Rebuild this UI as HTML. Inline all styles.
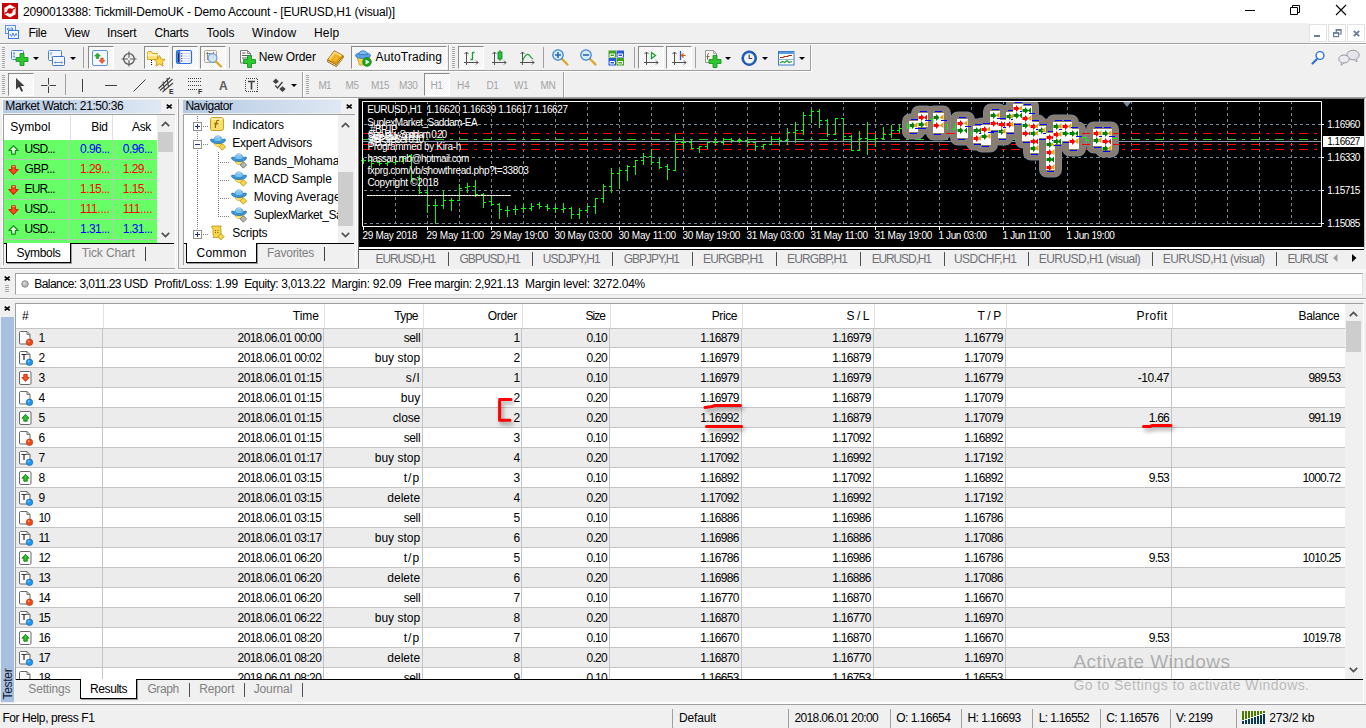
<!DOCTYPE html>
<html lang="en">
<head>
<meta charset="utf-8">
<title>2090013388: Tickmill-DemoUK - Demo Account - [EURUSD,H1 (visual)]</title>
<style>
html,body{margin:0;padding:0;}
body{width:1366px;height:728px;overflow:hidden;background:#f0f0f0;font-family:"Liberation Sans",sans-serif;font-size:12px;color:#000;}
#app{position:relative;width:1366px;height:728px;overflow:hidden;background:#f0f0f0;}
.a{position:absolute;}
.t{position:absolute;white-space:pre;line-height:16px;height:16px;}
.hl{position:absolute;height:1px;}
.vl{position:absolute;width:1px;}
svg{position:absolute;overflow:visible;}
.grip{position:absolute;width:3px;background:repeating-linear-gradient(to bottom,#a8a8a8 0,#a8a8a8 1px,transparent 1px,transparent 2px);}
.pressed{position:absolute;background:#f8f8f8;border:1px solid #8a8a8a;border-right-color:#fff;border-bottom-color:#fff;box-sizing:border-box;background-image:repeating-conic-gradient(#ffffff 0% 25%, #f0f0f0 0% 50%);background-size:2px 2px;}
.sep{position:absolute;width:1px;background:#a0a0a0;}
.dd{position:absolute;width:0;height:0;border-left:3px solid transparent;border-right:3px solid transparent;border-top:3px solid #000;}
.tf{color:#b0b0b0;font-size:11px;}
</style>
</head>
<body>
<div id="app">
<div class="a" style="left:0px;top:0px;width:1366px;height:23px;background:#ffffff;"></div>
<svg style="left:2px;top:3px" width="16" height="16" viewBox="0 0 16 16"><rect width="16" height="16" fill="#cc0000"/><path d="M8 1.6l5.6 3.2v6.4L8 14.4 2.4 11.2V4.8z" fill="#fff"/><circle cx="8" cy="8" r="2.7" fill="#cc0000"/><path d="M2.6 10.6L12.9 5.2" stroke="#cc0000" stroke-width="1.3"/></svg>
<div class="t" style="left:23.00px;top:4px;letter-spacing:-0.166px;">2090013388: Tickmill-DemoUK - Demo Account - [EURUSD,H1 (visual)]</div>
<div class="a" style="left:1245px;top:10px;width:10px;height:1px;background:#000;"></div>
<svg style="left:1290px;top:5px" width="10" height="10" viewBox="0 0 10 10"><path d="M0.5 2.5h7v7h-7zM2.5 2.5v-2h7v7h-2" fill="none" stroke="#000" stroke-width="1"/></svg>
<svg style="left:1336px;top:5px" width="10" height="10" viewBox="0 0 10 10"><path d="M0 0l10 10M10 0L0 10" fill="none" stroke="#000" stroke-width="1.1"/></svg>
<div class="a" style="left:0px;top:23px;width:1366px;height:20px;background:#f0f0f0;"></div>
<svg style="left:5px;top:25px" width="15" height="15" viewBox="0 0 15 15"><rect x="0.5" y="0.5" width="10" height="8" fill="#eef4ff" stroke="#5b92ea" stroke-width="1"/><path d="M2 4h6M3.5 2.5L2 4l1.5 1.5M6.5 2.5L8 4 6.5 5.5" stroke="#3b78e7" fill="none" stroke-width="0.9"/><rect x="3.5" y="5.5" width="10" height="8" fill="#f4f8ff" stroke="#3b78e7" stroke-width="1"/><path d="M5 9l1.5 2.5L8 8l1.5 3.5L11 8.5l1 2" stroke="#3b78e7" fill="none" stroke-width="0.9"/></svg>
<div class="t" style="left:28.50px;top:25px;letter-spacing:-0.336px;">File</div>
<div class="t" style="left:64.50px;top:25px;letter-spacing:-0.199px;">View</div>
<div class="t" style="left:107.00px;top:25px;letter-spacing:-0.083px;">Insert</div>
<div class="t" style="left:154.50px;top:25px;letter-spacing:-0.224px;">Charts</div>
<div class="t" style="left:206.50px;top:25px;letter-spacing:-0.003px;">Tools</div>
<div class="t" style="left:252.00px;top:25px;letter-spacing:0.302px;">Window</div>
<div class="t" style="left:314.00px;top:25px;letter-spacing:0.203px;">Help</div>
<div class="a" style="left:1309px;top:23px;width:57px;height:20px;background:#ffffff;"></div>
<div class="a" style="left:1309px;top:24px;width:18px;height:18px;background:#ffffff;border:1px solid #e2e2e2;box-sizing:border-box;"></div>
<div class="a" style="left:1328px;top:24px;width:18px;height:18px;background:#ffffff;border:1px solid #e2e2e2;box-sizing:border-box;"></div>
<div class="a" style="left:1347px;top:24px;width:18px;height:18px;background:#ffffff;border:1px solid #e2e2e2;box-sizing:border-box;"></div>
<div class="a" style="left:1314px;top:35px;width:6px;height:2px;background:#6a7f98;"></div>
<svg style="left:1332px;top:28px" width="10" height="10" viewBox="0 0 10 10"><path d="M4.300 5.500V2h4.700v4h-2" fill="none" stroke="#6a7f98" stroke-width="1.200"/><path d="M3.700 1.800h5.900" stroke="#6a7f98" stroke-width="1.700"/><rect x="1.600" y="4.800" width="4.900" height="3.800" fill="#ffffff" stroke="#6a7f98" stroke-width="1.200"/><path d="M1 4.900h6.100" stroke="#6a7f98" stroke-width="1.700"/></svg>
<svg style="left:1353px;top:30px" width="7" height="7" viewBox="0 0 7 7"><path d="M0.800 0.800l5.400 5.400M6.200 0.800L0.800 6.200" fill="none" stroke="#6a7f98" stroke-width="1.900"/></svg>
<div class="hl" style="left:0px;top:43px;width:1366px;background:#a0a0a0"></div>
<div class="hl" style="left:0px;top:44px;width:1366px;background:#ffffff"></div>
<div class="hl" style="left:0px;top:70px;width:810px;background:#a0a0a0"></div>
<div class="hl" style="left:0px;top:71px;width:811px;background:#ffffff"></div>
<div class="vl" style="left:810px;top:45px;height:26px;background:#a0a0a0"></div>
<div class="vl" style="left:811px;top:45px;height:27px;background:#ffffff"></div>
<div class="grip" style="left:2px;top:47px;width:3px;height:21px;"></div>
<div class="grip" style="left:452px;top:47px;width:3px;height:21px;"></div>
<div class="vl" style="left:448px;top:45px;height:25px;background:#a0a0a0"></div>
<div class="vl" style="left:449px;top:45px;height:25px;background:#ffffff"></div>
<div class="pressed" style="left:88px;top:46px;width:26px;height:23px;"></div>
<div class="pressed" style="left:144px;top:46px;width:25px;height:23px;"></div>
<div class="pressed" style="left:172px;top:46px;width:26px;height:23px;"></div>
<div class="pressed" style="left:200px;top:46px;width:26px;height:23px;"></div>
<div class="pressed" style="left:351px;top:46px;width:96px;height:23px;"></div>
<div class="pressed" style="left:458px;top:46px;width:26px;height:23px;"></div>
<div class="pressed" style="left:638px;top:46px;width:26px;height:23px;"></div>
<div class="pressed" style="left:666px;top:46px;width:26px;height:23px;"></div>
<div class="sep" style="left:83px;top:47px;width:1px;height:21px;"></div>
<div class="sep" style="left:229px;top:47px;width:1px;height:21px;"></div>
<div class="sep" style="left:543px;top:47px;width:1px;height:21px;"></div>
<div class="sep" style="left:634px;top:47px;width:1px;height:21px;"></div>
<div class="sep" style="left:695px;top:47px;width:1px;height:21px;"></div>
<div class="dd" style="left:33px;top:57px;width:0px;height:0px;"></div>
<div class="dd" style="left:70px;top:57px;width:0px;height:0px;"></div>
<div class="dd" style="left:725px;top:57px;width:0px;height:0px;"></div>
<div class="dd" style="left:762px;top:57px;width:0px;height:0px;"></div>
<div class="dd" style="left:799px;top:57px;width:0px;height:0px;"></div>
<svg style="left:11px;top:50px" width="18" height="16" viewBox="0 0 18 16"><rect x="0.5" y="0.5" width="12" height="9" rx="1" fill="#f3f7fd" stroke="#4a86d0"/><path d="M3 2.5v5M2 4l1-1.5L4 4M2 6l1 1.5L4 6" stroke="#6d8fb8" fill="none" stroke-width="0.8"/><path d="M9.5 4h4v4h4v4h-4v4h-4v-4h-4v-4h4z" fill="#2cc82c" stroke="#0c8a1c" stroke-width="0.8" transform="translate(-0.5,-0.5)"/></svg>
<svg style="left:48px;top:50px" width="18" height="16" viewBox="0 0 18 16"><rect x="0.5" y="0.5" width="13" height="10" rx="1" fill="#f3f7fd" stroke="#4a86d0"/><path d="M3 2.5v3M3 7h7.5M2 3.5l1-1 1 1M9.5 6l1 1-1 1" stroke="#6d8fb8" fill="none" stroke-width="0.8"/><rect x="4.5" y="6.5" width="12" height="9" rx="1" fill="#f3f7fd" stroke="#3a76c4"/><path d="M6.5 12.5h8M7.5 11.5l-1 1 1 1M13.5 11.5l1 1-1 1" stroke="#4a7ab8" fill="none" stroke-width="0.8"/></svg>
<svg style="left:92px;top:50px" width="17" height="16" viewBox="0 0 17 16"><rect x="0.5" y="0.5" width="15" height="15" rx="1.5" fill="#f5f9ff" stroke="#5b95dc"/><path d="M5.5 3l3 3h-1.7v2.5h-2.6V6H2.5z" fill="#2db02d" stroke="#128a12" stroke-width="0.5"/><path d="M10 13.5l-3-3h1.7V8h2.6v2.5H13z" fill="#f06030" stroke="#c83c10" stroke-width="0.5"/></svg>
<svg style="left:120.5px;top:50.5px" width="16" height="16" viewBox="0 0 16 16"><circle cx="8" cy="8" r="5.300" fill="none" stroke="#585858" stroke-width="1.300"/><path d="M8 0.500v15M0.500 8h15" stroke="#585858" stroke-width="1.100"/><circle cx="8" cy="8" r="1.200" fill="#f0f0f0"/></svg>
<svg style="left:147px;top:49px" width="20" height="18" viewBox="0 0 20 18"><path d="M0.5 3.5v7h10v-6h-5l-1-2h-3z" fill="#ffe27a" stroke="#d0a020" stroke-width="0.9"/><path d="M0.5 6h10" stroke="#fff6c8" stroke-width="1.5"/><path d="M4.5 11v5" stroke="#202020" stroke-width="1" stroke-dasharray="1 1"/><path d="M12.5 6.5l1.7 3.6 3.8.4-2.8 2.7.8 3.8-3.5-1.9-3.5 1.9.8-3.8-2.8-2.7 3.8-.4z" fill="#ffd94a" stroke="#c79a18" stroke-width="0.9"/></svg>
<svg style="left:176px;top:50px" width="17" height="15" viewBox="0 0 17 15"><rect x="0.5" y="0.5" width="15" height="13" rx="1.5" fill="#ffffff" stroke="#2f6fd0" stroke-width="1.2"/><rect x="1" y="1" width="3.4" height="12" fill="#3f7fe0"/><path d="M2.6 3v9" stroke="#102040" stroke-width="0.9"/><path d="M6 3.5h9M6 6h9M6 8.5h9M6 11h9" stroke="#b8c8ff" stroke-width="0.8"/><path d="M5 3.5h1.2M5 8.5h1.2" stroke="#e02020" stroke-width="1.2"/><path d="M5 6h1.2M5 11h1.2" stroke="#202020" stroke-width="1.2"/></svg>
<svg style="left:204px;top:50px" width="19" height="18" viewBox="0 0 19 18"><rect x="0.5" y="0.5" width="12" height="12" rx="1" fill="#f4f2ea" stroke="#b0a890"/><path d="M3.5 2v8M2 3.5h8M9.5 2v7" stroke="#707070" stroke-width="0.8" fill="none"/><circle cx="8.5" cy="8" r="4.4" fill="#cfe3f8" fill-opacity="0.85" stroke="#6fa0dc" stroke-width="1.2"/><path d="M12 11.5l5 5" stroke="#d8a828" stroke-width="2.2" stroke-linecap="round"/></svg>
<svg style="left:239px;top:50px" width="18" height="18" viewBox="0 0 18 18"><path d="M1.5 0.5h7l3 3v9.5h-10z" fill="#fafafa" stroke="#707070" stroke-width="0.9"/><path d="M8.5 0.5v3h3" fill="none" stroke="#707070" stroke-width="0.8"/><path d="M3 3h3.5M3 5.5h6M3 8h6" stroke="#606060" stroke-width="1"/><path d="M9 7h4v4h4v4h-4v4h-4v-4h-4v-4h4z" fill="#2cc82c" stroke="#0c8a1c" stroke-width="0.8" transform="translate(-0.5,-1.5)"/></svg>
<div class="t" style="left:258.80px;top:49px;letter-spacing:-0.113px;">New Order</div>
<svg style="left:327px;top:50px" width="17" height="17" viewBox="0 0 17 17"><path d="M0.600 10.400v1.300l8.800 4.800 6.800-8.800V6.200" fill="#b87c10" stroke="#7a4c04" stroke-width="0.9"/><path d="M1.200 11.200l8.200 4.400 6.200-8" fill="none" stroke="#fff0c0" stroke-width="0.9"/><path d="M0.500 9.800L7.300 0.800l8.900 4.900-6.800 9z" fill="#f0b428" stroke="#9a6408" stroke-width="0.9"/><path d="M2.200 9.300L7.700 2.300l6.600 3.600" fill="none" stroke="#ffe48c" stroke-width="1.400"/><path d="M5 10.500l4 2.300 4.500-6" fill="none" stroke="#d89418" stroke-width="1.200"/></svg>
<svg style="left:355px;top:49px" width="17" height="18" viewBox="0 0 17 18"><path d="M2 8l2.5 8h8L15 8z" fill="#f6d250" stroke="#c09a20" stroke-width="0.8"/><ellipse cx="8" cy="6.5" rx="7.6" ry="3" fill="#5aa0e0" stroke="#2f78c0" stroke-width="0.8"/><path d="M3.8 5.5c0-5 8.4-5 8.4 0z" fill="#7cbcf0" stroke="#2f78c0" stroke-width="0.8"/><circle cx="12" cy="13" r="4.3" fill="#18a818" stroke="#0b7a0b" stroke-width="0.7"/><path d="M10.6 10.6l4 2.4-4 2.4z" fill="#fff"/></svg>
<div class="t" style="left:375.60px;top:49px;letter-spacing:0.143px;">AutoTrading</div>
<svg style="left:463px;top:50px" width="16" height="16" viewBox="0 0 16 16"><path d="M3.5 2v13M1.5 4l2-2 2 2M1 12.5h14M13 10.5l2 2-2 2" fill="none" stroke="#505050" stroke-width="1"/><path d="M9.5 2v8M9.5 2.5h2M7.5 9.5h2" stroke="#18a030" stroke-width="1.3" fill="none"/></svg>
<svg style="left:491px;top:50px" width="16" height="16" viewBox="0 0 16 16"><path d="M3.5 2v13M1.5 4l2-2 2 2M1 12.5h14M13 10.5l2 2-2 2" fill="none" stroke="#505050" stroke-width="1"/><path d="M9 0v11" stroke="#108020" stroke-width="1"/><rect x="7" y="2" width="4" height="7" fill="#28c040" stroke="#108020" stroke-width="0.8"/></svg>
<svg style="left:519px;top:50px" width="16" height="16" viewBox="0 0 16 16"><path d="M3.5 2v13M1.5 4l2-2 2 2M1 12.5h14M13 10.5l2 2-2 2" fill="none" stroke="#505050" stroke-width="1"/><path d="M3.5 11c2-5 4.5-8 6.5-6s2 3 4 4" stroke="#18a030" stroke-width="1.2" fill="none"/></svg>
<svg style="left:552px;top:49px" width="17" height="17" viewBox="0 0 17 17"><path d="M9.5 9.5l6 6" stroke="#d8a828" stroke-width="2.4" stroke-linecap="round"/><circle cx="6" cy="6" r="5.2" fill="#d6ebfb" stroke="#2f7fd0" stroke-width="1.2"/><path d="M3 6h6M6 3v6" stroke="#2868b8" stroke-width="1.6"/></svg>
<svg style="left:580px;top:49px" width="17" height="17" viewBox="0 0 17 17"><path d="M9.5 9.5l6 6" stroke="#d8a828" stroke-width="2.4" stroke-linecap="round"/><circle cx="6" cy="6" r="5.2" fill="#d6ebfb" stroke="#2f7fd0" stroke-width="1.2"/><path d="M3 6h6" stroke="#2868b8" stroke-width="1.6"/></svg>
<svg style="left:608px;top:50px" width="17" height="16" viewBox="0 0 17 16"><rect x="0.5" y="0.5" width="7.5" height="7" fill="#3fa320"/><rect x="8.5" y="0.5" width="7.5" height="7" fill="#2858d8"/><rect x="0.5" y="8" width="7.5" height="7.5" fill="#2858d8"/><rect x="8.5" y="8" width="7.5" height="7.5" fill="#3fa320"/><path d="M2 4h4.5v2.5H2zM10 4h4.5v2.5H10zM2 11.5h4.5V14H2zM10 11.5h4.5V14H10z" fill="none" stroke="#fff" stroke-width="1"/></svg>
<svg style="left:643px;top:50px" width="16" height="16" viewBox="0 0 16 16"><path d="M3.5 2v13M1.5 4l2-2 2 2M1 12.5h14M13 10.5l2 2-2 2" fill="none" stroke="#505050" stroke-width="1"/><path d="M8.5 2.5l4 3-4 3z" fill="#fff" stroke="#18a030" stroke-width="1.3"/></svg>
<svg style="left:671px;top:50px" width="16" height="16" viewBox="0 0 16 16"><path d="M3.5 2v13M1.5 4l2-2 2 2M1 12.5h14M13 10.5l2 2-2 2" fill="none" stroke="#505050" stroke-width="1"/><path d="M9.5 1v9" stroke="#2060c0" stroke-width="1.3"/><path d="M10.5 5.5h4M12.5 3.5l-2 2 2 2" stroke="#e05010" stroke-width="1.2" fill="none"/></svg>
<svg style="left:705px;top:50px" width="17" height="18" viewBox="0 0 17 18"><path d="M0.5 0.5h8l3 3v9h-11z" fill="#f6f4ee" stroke="#909090" stroke-width="0.9"/><path d="M8.5 0.5v3h3" fill="none" stroke="#909090" stroke-width="0.8"/><path d="M4 3.5c-1.5 0-1.5 1.5-1.5 3v3M1.5 6.5h3" stroke="#606040" stroke-width="0.9" fill="none"/><path d="M9 7h4v4h4v4h-4v4h-4v-4h-4v-4h4z" fill="#2cc82c" stroke="#0c8a1c" stroke-width="0.8" transform="translate(-1,-1.5)"/></svg>
<svg style="left:741px;top:50px" width="17" height="17" viewBox="0 0 17 17"><circle cx="8.2" cy="8.2" r="7.3" fill="#1a5fc8" stroke="#0d3f90" stroke-width="0.8"/><circle cx="8.2" cy="8.2" r="5.2" fill="#f4f4f0"/><path d="M8.2 4.5v4h3" stroke="#404040" stroke-width="1.1" fill="none"/></svg>
<svg style="left:778px;top:51px" width="17" height="15" viewBox="0 0 17 15"><rect x="0.5" y="0.5" width="15.5" height="13.5" fill="#ffffff" stroke="#3a78c8" stroke-width="1"/><rect x="1" y="1" width="14.5" height="2" fill="#5a98e0"/><path d="M2 6.5h3l1.5-1h3l1.5-1h3" stroke="#a03010" stroke-width="1.2" fill="none"/><path d="M1 8.5h15" stroke="#7aa8e0" stroke-width="0.8"/><path d="M2 12l2.5-1.5 2 1 2.5-2 2 2 3-1" stroke="#18a030" stroke-width="1.2" fill="none"/></svg>
<svg style="left:1311px;top:50px" width="15" height="15" viewBox="0 0 15 15"><path d="M5.5 9.5l-4 4" stroke="#2f6fd8" stroke-width="2.2" stroke-linecap="round"/><circle cx="9" cy="5.5" r="3.9" fill="#fff" stroke="#2f6fd8" stroke-width="1.4"/></svg>
<svg style="left:1338px;top:49px" width="23" height="17" viewBox="0 0 23 17"><ellipse cx="15" cy="6" rx="6.2" ry="4.8" fill="#e6e6ea" stroke="#8c8c96" stroke-width="0.9"/><path d="M16 10.5l3 2.5-0.5-3.2" fill="#e6e6ea" stroke="#8c8c96" stroke-width="0.8"/><ellipse cx="6" cy="10" rx="5.2" ry="4" fill="#ececf0" stroke="#8c8c96" stroke-width="0.9"/><path d="M3.5 13.3l-0.5 3 3-2.4" fill="#ececf0" stroke="#8c8c96" stroke-width="0.8"/></svg>
<div class="hl" style="left:0px;top:97px;width:1366px;background:#a0a0a0"></div>
<div class="hl" style="left:0px;top:98px;width:358px;background:#ffffff"></div>
<div class="grip" style="left:2px;top:75px;width:3px;height:20px;"></div>
<div class="grip" style="left:306px;top:75px;width:3px;height:20px;"></div>
<div class="pressed" style="left:8px;top:73px;width:26px;height:23px;"></div>
<div class="pressed" style="left:424px;top:73px;width:26px;height:23px;"></div>
<div class="sep" style="left:65px;top:74px;width:1px;height:21px;"></div>
<div class="vl" style="left:302px;top:72px;height:25px;background:#a0a0a0"></div>
<div class="vl" style="left:303px;top:72px;height:25px;background:#ffffff"></div>
<div class="vl" style="left:563px;top:72px;height:25px;background:#a0a0a0"></div>
<div class="vl" style="left:564px;top:72px;height:25px;background:#ffffff"></div>
<svg style="left:15px;top:77px" width="10" height="16" viewBox="0 0 10 16"><path d="M1 1v11.5l3-2.8 2.3 5 1.8-.8-2.3-4.8H9.5z" fill="#404040"/></svg>
<svg style="left:41px;top:78px" width="16" height="16" viewBox="0 0 16 16"><path d="M7.5 0v6.5M7.5 8.5V15M0 7.5h6.5M8.5 7.5H15" stroke="#404040" stroke-width="1"/></svg>
<div class="vl" style="left:82px;top:79px;height:13px;background:#404040"></div>
<div class="hl" style="left:105px;top:85px;width:12px;background:#404040"></div>
<svg style="left:133px;top:79px" width="13" height="13" viewBox="0 0 13 13"><path d="M0.5 12.5L12.5 0.5" stroke="#404040" stroke-width="1"/></svg>
<svg style="left:158px;top:77px" width="18" height="18" viewBox="0 0 18 18"><path d="M0.500 11.500L12 0.500M2 13.500L14.500 2M4.500 15L15 6M5 4.500l1.500 9M9 1l1.500 9" stroke="#404040" stroke-width="1.100" fill="none"/></svg>
<div class="t" style="left:169.00px;top:87px;line-height:9px;height:9px;font-size:7px;color:#303030;font-weight:bold;">E</div>
<svg style="left:188px;top:78px" width="14" height="14" viewBox="0 0 14 14"><path d="M0 0.5h13M0 3.5h13M0 7.5h13M0 11.5h9" stroke="#404040" stroke-width="1" stroke-dasharray="1 1" fill="none"/></svg>
<div class="t" style="left:198.00px;top:87px;line-height:9px;height:9px;font-size:7px;color:#303030;font-weight:bold;">F</div>
<div class="t" style="left:219.00px;top:78px;letter-spacing:-0.172px;color:#5a5a5a;font-weight:bold;">A</div>
<svg style="left:245px;top:78px" width="13" height="14" viewBox="0 0 13 14"><rect x="0.5" y="0.5" width="12" height="13" fill="none" stroke="#404040" stroke-width="1" stroke-dasharray="1 1" shape-rendering="crispEdges"/><path d="M3 3.5h7M6.5 3.5v8" stroke="#404040" stroke-width="1.6"/></svg>
<svg style="left:272px;top:78px" width="15" height="15" viewBox="0 0 15 15"><path d="M3.800 0.400l3 3-3 2.600-3-2.600z" fill="#404040"/><path d="M10.500 8.200l3.200 2.800-3.200 3-3.200-3z" fill="#404040"/><path d="M3.200 7.500l2.300 2.500 5-6" stroke="#404040" stroke-width="1.300" fill="none"/></svg>
<div class="dd" style="left:291px;top:84px;width:0px;height:0px;"></div>
<div class="t" style="left:318.50px;top:79px;letter-spacing:-0.945px;line-height:13px;height:13px;font-size:10px;color:#a4a4a4;">M1</div>
<div class="t" style="left:345.50px;top:79px;letter-spacing:-0.445px;line-height:13px;height:13px;font-size:10px;color:#a4a4a4;">M5</div>
<div class="t" style="left:371.00px;top:79px;letter-spacing:-0.484px;line-height:13px;height:13px;font-size:10px;color:#a4a4a4;">M15</div>
<div class="t" style="left:399.00px;top:79px;letter-spacing:-0.318px;line-height:13px;height:13px;font-size:10px;color:#a4a4a4;">M30</div>
<div class="t" style="left:430.50px;top:79px;letter-spacing:-0.391px;line-height:13px;height:13px;font-size:10px;color:#a4a4a4;">H1</div>
<div class="t" style="left:457.00px;top:79px;letter-spacing:0.109px;line-height:13px;height:13px;font-size:10px;color:#a4a4a4;">H4</div>
<div class="t" style="left:486.50px;top:79px;letter-spacing:-0.391px;line-height:13px;height:13px;font-size:10px;color:#a4a4a4;">D1</div>
<div class="t" style="left:514.00px;top:79px;letter-spacing:-0.500px;line-height:13px;height:13px;font-size:10px;color:#a4a4a4;">W1</div>
<div class="t" style="left:540.50px;top:79px;letter-spacing:-0.273px;line-height:13px;height:13px;font-size:10px;color:#a4a4a4;">MN</div>
<div class="vl" style="left:2px;top:99px;height:168px;background:#ffffff"></div>
<div class="vl" style="left:2px;top:99px;height:168px;background:#ffffff"></div>
<div class="a" style="left:3px;top:100px;width:158px;height:13px;background:linear-gradient(to right,#b4c8e2,#dfe8f4);"></div>
<div class="t" style="left:5.30px;top:98px;letter-spacing:-0.405px;">Market Watch: 21:50:36</div>
<svg style="left:166px;top:104px" width="6.4" height="5" viewBox="0 0 6.4 5"><path d="M0.700 0.600L5.7 4.4M5.7 0.600L0.700 4.4" stroke="#000" stroke-width="1.7" fill="none"/></svg>
<div class="a" style="left:3px;top:114px;width:172px;height:129px;background:#ffffff;"></div>
<div class="hl" style="left:3px;top:114px;width:172px;background:#a0a0a0"></div>
<div class="vl" style="left:3px;top:114px;height:151px;background:#a0a0a0"></div>
<div class="a" style="left:4px;top:140px;width:153px;height:103px;background:#66ff66;"></div>
<div class="a" style="left:157px;top:115px;width:18px;height:128px;background:#f0f0f0;"></div>
<div class="a" style="left:158px;top:132px;width:15px;height:20px;background:#cdcdcd;"></div>
<svg style="left:161px;top:121px" width="9" height="6" viewBox="0 0 9 6"><path d="M0.8 5.2L4.5 1.5 8.2 5.2" fill="none" stroke="#505050" stroke-width="1.7"/></svg>
<svg style="left:161px;top:232px" width="9" height="6" viewBox="0 0 9 6"><path d="M0.8 0.8L4.5 4.5 8.2 0.8" fill="none" stroke="#505050" stroke-width="1.7"/></svg>
<div class="vl" style="left:70px;top:115px;height:25px;background:#e0e0e0"></div>
<div class="vl" style="left:112px;top:115px;height:25px;background:#e0e0e0"></div>
<div class="vl" style="left:69px;top:140px;height:103px;background:#b4c8b4"></div>
<div class="vl" style="left:112px;top:140px;height:103px;background:#b4c8b4"></div>
<div class="hl" style="left:4px;top:159px;width:153px;background:#b4c8b4"></div>
<div class="hl" style="left:4px;top:179px;width:153px;background:#b4c8b4"></div>
<div class="hl" style="left:4px;top:199px;width:153px;background:#b4c8b4"></div>
<div class="hl" style="left:4px;top:219px;width:153px;background:#b4c8b4"></div>
<div class="hl" style="left:4px;top:239px;width:153px;background:#b4c8b4"></div>
<div class="t" style="left:10.30px;top:119px;letter-spacing:-0.003px;">Symbol</div>
<div class="t" style="left:91.20px;top:119px;letter-spacing:-0.281px;">Bid</div>
<div class="t" style="left:132.00px;top:119px;letter-spacing:-0.333px;">Ask</div>
<svg style="left:8px;top:145px" width="11" height="10" viewBox="0 0 11 10"><path d="M5.5 0.7l4.6 4.8H7.3v3.6H3.7V5.5H0.9z" fill="#e8ffe8" stroke="#128a12" stroke-width="1.2" stroke-linejoin="round"/></svg>
<div class="t" style="left:24.60px;top:141px;letter-spacing:-0.888px;">USD...</div>
<div class="t" style="left:80.00px;top:141px;letter-spacing:-0.547px;color:#0000ff;">0.96...</div>
<div class="t" style="left:122.80px;top:141px;letter-spacing:-0.547px;color:#0000ff;">0.96...</div>
<svg style="left:8px;top:165px" width="11" height="10" viewBox="0 0 11 10"><path d="M5.5 9.3L0.9 4.5h2.8V0.9h3.6v3.6h2.8z" fill="#ff4a20" stroke="#d02808" stroke-width="1.1" stroke-linejoin="round"/><path d="M4.3 1.5h2.4" stroke="#ffb090" stroke-width="1"/></svg>
<div class="t" style="left:24.60px;top:161px;letter-spacing:-0.628px;">GBP...</div>
<div class="t" style="left:80.00px;top:161px;letter-spacing:-0.547px;color:#ff0000;">1.29...</div>
<div class="t" style="left:122.80px;top:161px;letter-spacing:-0.547px;color:#ff0000;">1.29...</div>
<svg style="left:8px;top:185px" width="11" height="10" viewBox="0 0 11 10"><path d="M5.5 9.3L0.9 4.5h2.8V0.9h3.6v3.6h2.8z" fill="#ff4a20" stroke="#d02808" stroke-width="1.1" stroke-linejoin="round"/><path d="M4.3 1.5h2.4" stroke="#ffb090" stroke-width="1"/></svg>
<div class="t" style="left:24.60px;top:181px;letter-spacing:-0.888px;">EUR...</div>
<div class="t" style="left:80.00px;top:181px;letter-spacing:-0.547px;color:#ff0000;">1.15...</div>
<div class="t" style="left:122.80px;top:181px;letter-spacing:-0.547px;color:#ff0000;">1.15...</div>
<svg style="left:8px;top:205px" width="11" height="10" viewBox="0 0 11 10"><path d="M5.5 9.3L0.9 4.5h2.8V0.9h3.6v3.6h2.8z" fill="#ff4a20" stroke="#d02808" stroke-width="1.1" stroke-linejoin="round"/><path d="M4.3 1.5h2.4" stroke="#ffb090" stroke-width="1"/></svg>
<div class="t" style="left:24.60px;top:201px;letter-spacing:-0.888px;">USD...</div>
<div class="t" style="left:80.00px;top:201px;letter-spacing:-0.292px;color:#ff0000;">111....</div>
<div class="t" style="left:122.80px;top:201px;letter-spacing:-0.292px;color:#ff0000;">111....</div>
<svg style="left:8px;top:225px" width="11" height="10" viewBox="0 0 11 10"><path d="M5.5 0.7l4.6 4.8H7.3v3.6H3.7V5.5H0.9z" fill="#e8ffe8" stroke="#128a12" stroke-width="1.2" stroke-linejoin="round"/></svg>
<div class="t" style="left:24.60px;top:221px;letter-spacing:-0.888px;">USD...</div>
<div class="t" style="left:80.00px;top:221px;letter-spacing:-0.547px;color:#0000ff;">1.31...</div>
<div class="t" style="left:122.80px;top:221px;letter-spacing:-0.547px;color:#0000ff;">1.31...</div>
<div class="hl" style="left:70px;top:243px;width:104px;background:#000000"></div>
<div class="hl" style="left:4px;top:243px;width:3px;background:#000000"></div>
<div class="a" style="left:6px;top:243px;width:65px;height:20px;background:#ffffff;border:1px solid #000;border-top:none;box-sizing:border-box;box-shadow:1px 1px 0 rgba(0,0,0,0.35);"></div>
<div class="t" style="left:16.50px;top:245px;letter-spacing:-0.288px;">Symbols</div>
<div class="t" style="left:81.70px;top:245px;letter-spacing:-0.123px;color:#808080;">Tick Chart</div>
<div class="vl" style="left:145px;top:247px;height:14px;background:#404040"></div>
<div class="vl" style="left:175px;top:114px;height:152px;background:#ffffff"></div>
<div class="hl" style="left:0px;top:268px;width:175px;background:#a0a0a0"></div>
<div class="vl" style="left:177px;top:99px;height:170px;background:#ffffff"></div>
<div class="vl" style="left:178px;top:99px;height:170px;background:#a0a0a0"></div>
<div class="a" style="left:183px;top:100px;width:158px;height:13px;background:linear-gradient(to right,#b4c8e2,#dfe8f4);"></div>
<div class="t" style="left:185.40px;top:98px;letter-spacing:-0.484px;">Navigator</div>
<svg style="left:346px;top:104px" width="6.4" height="5" viewBox="0 0 6.4 5"><path d="M0.700 0.600L5.7 4.4M5.7 0.600L0.700 4.4" stroke="#000" stroke-width="1.7" fill="none"/></svg>
<div class="a" style="left:183px;top:114px;width:172px;height:129px;background:#ffffff;"></div>
<div class="hl" style="left:183px;top:114px;width:172px;background:#a0a0a0"></div>
<div class="vl" style="left:183px;top:114px;height:151px;background:#a0a0a0"></div>
<div class="a" style="left:338px;top:115px;width:17px;height:128px;background:#f0f0f0;"></div>
<div class="a" style="left:338px;top:172px;width:15px;height:54px;background:#cdcdcd;"></div>
<svg style="left:341px;top:122px" width="9" height="6" viewBox="0 0 9 6"><path d="M0.8 5.2L4.5 1.5 8.2 5.2" fill="none" stroke="#505050" stroke-width="1.7"/></svg>
<svg style="left:341px;top:232px" width="9" height="6" viewBox="0 0 9 6"><path d="M0.8 0.8L4.5 4.5 8.2 0.8" fill="none" stroke="#505050" stroke-width="1.7"/></svg>
<div class="a" style="left:197px;top:116px;width:1px;height:118px;background:repeating-linear-gradient(to bottom,#808080 0,#808080 1px,transparent 1px,transparent 2px);"></div>
<div class="a" style="left:218px;top:152px;width:1px;height:65px;background:repeating-linear-gradient(to bottom,#808080 0,#808080 1px,transparent 1px,transparent 2px);"></div>
<div class="a" style="left:220px;top:162px;width:10px;height:1px;background:repeating-linear-gradient(to right,#808080 0,#808080 1px,transparent 1px,transparent 2px);"></div>
<div class="a" style="left:220px;top:180px;width:10px;height:1px;background:repeating-linear-gradient(to right,#808080 0,#808080 1px,transparent 1px,transparent 2px);"></div>
<div class="a" style="left:220px;top:198px;width:10px;height:1px;background:repeating-linear-gradient(to right,#808080 0,#808080 1px,transparent 1px,transparent 2px);"></div>
<div class="a" style="left:220px;top:216px;width:10px;height:1px;background:repeating-linear-gradient(to right,#808080 0,#808080 1px,transparent 1px,transparent 2px);"></div>
<div class="a" style="left:203px;top:126px;width:6px;height:1px;background:repeating-linear-gradient(to right,#808080 0,#808080 1px,transparent 1px,transparent 2px);"></div>
<div class="a" style="left:203px;top:144px;width:6px;height:1px;background:repeating-linear-gradient(to right,#808080 0,#808080 1px,transparent 1px,transparent 2px);"></div>
<div class="a" style="left:203px;top:234px;width:6px;height:1px;background:repeating-linear-gradient(to right,#808080 0,#808080 1px,transparent 1px,transparent 2px);"></div>
<svg style="left:193px;top:122px" width="9" height="9" viewBox="0 0 9 9"><rect x="0.5" y="0.5" width="8" height="8" fill="#fff" stroke="#909090"/><path d="M2 4.5h5M4.5 2v5" stroke="#2030a0" stroke-width="1"/></svg>
<svg style="left:193px;top:140px" width="9" height="9" viewBox="0 0 9 9"><rect x="0.5" y="0.5" width="8" height="8" fill="#fff" stroke="#909090"/><path d="M2 4.5h5" stroke="#2030a0" stroke-width="1"/></svg>
<svg style="left:193px;top:230px" width="9" height="9" viewBox="0 0 9 9"><rect x="0.5" y="0.5" width="8" height="8" fill="#fff" stroke="#909090"/><path d="M2 4.5h5M4.5 2v5" stroke="#2030a0" stroke-width="1"/></svg>
<svg style="left:210px;top:117px" width="14" height="14" viewBox="0 0 14 14"><rect x="0.5" y="0.5" width="13" height="13" rx="2" fill="#f8de6a" stroke="#c8a020"/><path d="M1.5 2h11" stroke="#fff4c0" stroke-width="1.5"/><path d="M9 3.5c-2-.8-2.6.5-3 3L5.2 11M4 6.8h4.5" stroke="#806000" stroke-width="1.1" fill="none"/></svg>
<div class="t" style="left:232.30px;top:117px;letter-spacing:-0.032px;">Indicators</div>
<svg style="left:210px;top:135px" width="17" height="16" viewBox="0 0 17 16"><path d="M4.300 8c0 4.600 7.400 4.600 7.400 0z" fill="#f7d64a" stroke="#c09a20" stroke-width="0.7"/><path d="M5.200 9.500c1 1.800 4.600 1.800 5.600 0" fill="none" stroke="#fff3b0" stroke-width="0.8"/><path d="M0.500 4.800C0.300 9.600 15.700 9.600 15.500 4.800C15.400 3.600 13.200 4.200 12 5H4C2.800 4.200 0.600 3.600 0.500 4.800z" fill="#3f9ad8" stroke="#1c6fb0" stroke-width="0.8"/><path d="M3.800 5.600c0-6.200 8.400-6.200 8.400 0c-2 1.300-6.400 1.300-8.400 0z" fill="#79c2f2" stroke="#2a80c4" stroke-width="0.7"/><path d="M5.500 3c1-1.600 3.500-1.700 4.500-0.800" fill="none" stroke="#c8e8fc" stroke-width="0.9"/><path d="M12.300 8.600l3.300 3.300-3.300 3.300-3.300-3.300z" fill="#f7d64a" stroke="#b89018" stroke-width="0.8"/></svg>
<div class="t" style="left:232.30px;top:135px;letter-spacing:-0.244px;">Expert Advisors</div>
<div class="a" style="left:253px;top:152px;width:85px;height:72px;overflow:hidden;"><div class="t" style="left:0.70px;top:1px;letter-spacing:-0.157px;">Bands_Mohamad</div>
<div class="t" style="left:0.70px;top:19px;letter-spacing:-0.124px;">MACD Sample</div>
<div class="t" style="left:0.70px;top:37px;letter-spacing:0.084px;">Moving Average</div>
<div class="t" style="left:0.70px;top:55px;letter-spacing:-0.406px;">SuplexMarket_Saddam</div>
</div>
<svg style="left:231px;top:153px" width="17" height="16" viewBox="0 0 17 16"><path d="M4.300 8c0 4.600 7.400 4.600 7.400 0z" fill="#f7d64a" stroke="#c09a20" stroke-width="0.7"/><path d="M5.200 9.500c1 1.800 4.600 1.800 5.600 0" fill="none" stroke="#fff3b0" stroke-width="0.8"/><path d="M0.500 4.800C0.300 9.600 15.700 9.600 15.500 4.800C15.400 3.600 13.200 4.200 12 5H4C2.800 4.200 0.600 3.600 0.500 4.800z" fill="#3f9ad8" stroke="#1c6fb0" stroke-width="0.8"/><path d="M3.800 5.600c0-6.200 8.400-6.200 8.400 0c-2 1.300-6.400 1.300-8.400 0z" fill="#79c2f2" stroke="#2a80c4" stroke-width="0.7"/><path d="M5.500 3c1-1.600 3.500-1.700 4.500-0.800" fill="none" stroke="#c8e8fc" stroke-width="0.9"/><path d="M12.300 8.600l3.300 3.300-3.300 3.300-3.300-3.300z" fill="#b4b4b4" stroke="#686868" stroke-width="0.8"/></svg>
<svg style="left:231px;top:171px" width="17" height="16" viewBox="0 0 17 16"><path d="M4.300 8c0 4.600 7.400 4.600 7.400 0z" fill="#f7d64a" stroke="#c09a20" stroke-width="0.7"/><path d="M5.200 9.500c1 1.800 4.600 1.800 5.600 0" fill="none" stroke="#fff3b0" stroke-width="0.8"/><path d="M0.500 4.800C0.300 9.600 15.700 9.600 15.500 4.800C15.400 3.600 13.200 4.200 12 5H4C2.800 4.200 0.600 3.600 0.500 4.800z" fill="#3f9ad8" stroke="#1c6fb0" stroke-width="0.8"/><path d="M3.800 5.600c0-6.200 8.400-6.200 8.400 0c-2 1.300-6.400 1.300-8.400 0z" fill="#79c2f2" stroke="#2a80c4" stroke-width="0.7"/><path d="M5.500 3c1-1.600 3.500-1.700 4.500-0.800" fill="none" stroke="#c8e8fc" stroke-width="0.9"/><path d="M12.300 8.600l3.300 3.300-3.300 3.300-3.300-3.300z" fill="#f7d64a" stroke="#b89018" stroke-width="0.8"/></svg>
<svg style="left:231px;top:189px" width="17" height="16" viewBox="0 0 17 16"><path d="M4.300 8c0 4.600 7.400 4.600 7.400 0z" fill="#f7d64a" stroke="#c09a20" stroke-width="0.7"/><path d="M5.200 9.500c1 1.800 4.600 1.800 5.600 0" fill="none" stroke="#fff3b0" stroke-width="0.8"/><path d="M0.500 4.800C0.300 9.600 15.700 9.600 15.500 4.800C15.400 3.600 13.200 4.200 12 5H4C2.800 4.200 0.600 3.600 0.500 4.800z" fill="#3f9ad8" stroke="#1c6fb0" stroke-width="0.8"/><path d="M3.800 5.600c0-6.200 8.400-6.200 8.400 0c-2 1.300-6.400 1.300-8.400 0z" fill="#79c2f2" stroke="#2a80c4" stroke-width="0.7"/><path d="M5.500 3c1-1.600 3.500-1.700 4.500-0.800" fill="none" stroke="#c8e8fc" stroke-width="0.9"/><path d="M12.300 8.600l3.300 3.300-3.300 3.300-3.300-3.300z" fill="#f7d64a" stroke="#b89018" stroke-width="0.8"/></svg>
<svg style="left:231px;top:207px" width="17" height="16" viewBox="0 0 17 16"><path d="M4.300 8c0 4.600 7.400 4.600 7.400 0z" fill="#f7d64a" stroke="#c09a20" stroke-width="0.7"/><path d="M5.200 9.500c1 1.800 4.600 1.800 5.600 0" fill="none" stroke="#fff3b0" stroke-width="0.8"/><path d="M0.500 4.800C0.300 9.600 15.700 9.600 15.500 4.800C15.400 3.600 13.200 4.200 12 5H4C2.800 4.200 0.600 3.600 0.500 4.800z" fill="#3f9ad8" stroke="#1c6fb0" stroke-width="0.8"/><path d="M3.800 5.600c0-6.200 8.400-6.200 8.400 0c-2 1.300-6.400 1.300-8.400 0z" fill="#79c2f2" stroke="#2a80c4" stroke-width="0.7"/><path d="M5.500 3c1-1.600 3.500-1.700 4.500-0.800" fill="none" stroke="#c8e8fc" stroke-width="0.9"/><path d="M12.300 8.600l3.300 3.300-3.300 3.300-3.300-3.300z" fill="#b4b4b4" stroke="#686868" stroke-width="0.8"/></svg>
<svg style="left:210px;top:225px" width="15" height="15" viewBox="0 0 15 15"><path d="M2 1h9.5c-1.2 1-1.2 2-.5 3v6c.8 1 .8 2 0 2.600H3c1-1 1-2 0-2.600v-6C2.200 3 1.200 2 2 1z" fill="#f7d64a" stroke="#b89018" stroke-width="0.8"/><path d="M5 5.500h1M7.500 5.500h1M5 7.500h1M7.500 7.500h1" stroke="#806000" stroke-width="1"/><path d="M11 8.500l3.200 3.200-3.200 3.200-3.200-3.200z" fill="#f7d64a" stroke="#b89018" stroke-width="0.8"/></svg>
<div class="t" style="left:232.30px;top:225px;letter-spacing:-0.239px;">Scripts</div>
<div class="hl" style="left:256px;top:243px;width:98px;background:#000000"></div>
<div class="hl" style="left:184px;top:243px;width:3px;background:#000000"></div>
<div class="a" style="left:186px;top:243px;width:71px;height:20px;background:#ffffff;border:1px solid #000;border-top:none;box-sizing:border-box;box-shadow:1px 1px 0 rgba(0,0,0,0.35);"></div>
<div class="t" style="left:196.60px;top:245px;letter-spacing:0.219px;">Common</div>
<div class="t" style="left:267.00px;top:245px;letter-spacing:-0.260px;color:#808080;">Favorites</div>
<div class="vl" style="left:324px;top:247px;height:14px;background:#404040"></div>
<div class="vl" style="left:355px;top:114px;height:152px;background:#ffffff"></div>
<div class="hl" style="left:178px;top:268px;width:178px;background:#a0a0a0"></div>
<div class="vl" style="left:357px;top:99px;height:150px;background:#ffffff"></div>
<div class="vl" style="left:358px;top:99px;height:150px;background:#707070"></div>
<div class="hl" style="left:358px;top:98px;width:1007px;background:#808080"></div>
<div class="a" style="left:359px;top:99px;width:1005px;height:148px;background:#000000;"></div>
<div class="vl" style="left:1364px;top:99px;height:150px;background:#c0c0c0"></div>
<svg style="left:359px;top:99px" width="1005" height="148" viewBox="0 0 1005 148"><path d="M36.5 3V127" stroke="#778899" stroke-width="1" stroke-dasharray="3 3" stroke-dashoffset="1"/><path d="M68.5 3V127" stroke="#778899" stroke-width="1" stroke-dasharray="3 3" stroke-dashoffset="1"/><path d="M100.5 3V127" stroke="#778899" stroke-width="1" stroke-dasharray="3 3" stroke-dashoffset="1"/><path d="M132.5 3V127" stroke="#778899" stroke-width="1" stroke-dasharray="3 3" stroke-dashoffset="1"/><path d="M164.5 3V127" stroke="#778899" stroke-width="1" stroke-dasharray="3 3" stroke-dashoffset="1"/><path d="M196.5 3V127" stroke="#778899" stroke-width="1" stroke-dasharray="3 3" stroke-dashoffset="1"/><path d="M228.5 3V127" stroke="#778899" stroke-width="1" stroke-dasharray="3 3" stroke-dashoffset="1"/><path d="M260.5 3V127" stroke="#778899" stroke-width="1" stroke-dasharray="3 3" stroke-dashoffset="1"/><path d="M292.5 3V127" stroke="#778899" stroke-width="1" stroke-dasharray="3 3" stroke-dashoffset="1"/><path d="M324.5 3V127" stroke="#778899" stroke-width="1" stroke-dasharray="3 3" stroke-dashoffset="1"/><path d="M356.5 3V127" stroke="#778899" stroke-width="1" stroke-dasharray="3 3" stroke-dashoffset="1"/><path d="M388.5 3V127" stroke="#778899" stroke-width="1" stroke-dasharray="3 3" stroke-dashoffset="1"/><path d="M420.5 3V127" stroke="#778899" stroke-width="1" stroke-dasharray="3 3" stroke-dashoffset="1"/><path d="M452.5 3V127" stroke="#778899" stroke-width="1" stroke-dasharray="3 3" stroke-dashoffset="1"/><path d="M484.5 3V127" stroke="#778899" stroke-width="1" stroke-dasharray="3 3" stroke-dashoffset="1"/><path d="M516.5 3V127" stroke="#778899" stroke-width="1" stroke-dasharray="3 3" stroke-dashoffset="1"/><path d="M548.5 3V127" stroke="#778899" stroke-width="1" stroke-dasharray="3 3" stroke-dashoffset="1"/><path d="M580.5 3V127" stroke="#778899" stroke-width="1" stroke-dasharray="3 3" stroke-dashoffset="1"/><path d="M612.5 3V127" stroke="#778899" stroke-width="1" stroke-dasharray="3 3" stroke-dashoffset="1"/><path d="M644.5 3V127" stroke="#778899" stroke-width="1" stroke-dasharray="3 3" stroke-dashoffset="1"/><path d="M676.5 3V127" stroke="#778899" stroke-width="1" stroke-dasharray="3 3" stroke-dashoffset="1"/><path d="M708.5 3V127" stroke="#778899" stroke-width="1" stroke-dasharray="3 3" stroke-dashoffset="1"/><path d="M740.5 3V127" stroke="#778899" stroke-width="1" stroke-dasharray="3 3" stroke-dashoffset="1"/><path d="M772.5 3V127" stroke="#778899" stroke-width="1" stroke-dasharray="3 3" stroke-dashoffset="1"/><path d="M804.5 3V127" stroke="#778899" stroke-width="1" stroke-dasharray="3 3" stroke-dashoffset="1"/><path d="M836.5 3V127" stroke="#778899" stroke-width="1" stroke-dasharray="3 3" stroke-dashoffset="1"/><path d="M868.5 3V127" stroke="#778899" stroke-width="1" stroke-dasharray="3 3" stroke-dashoffset="1"/><path d="M900.5 3V127" stroke="#778899" stroke-width="1" stroke-dasharray="3 3" stroke-dashoffset="1"/><path d="M932.5 3V127" stroke="#778899" stroke-width="1" stroke-dasharray="3 3" stroke-dashoffset="1"/><path d="M5 25.5H962" stroke="#778899" stroke-width="1" stroke-dasharray="3 3"/><path d="M5 58.5H962" stroke="#778899" stroke-width="1" stroke-dasharray="3 3"/><path d="M5 91.5H962" stroke="#778899" stroke-width="1" stroke-dasharray="3 3"/><path d="M5 124.5H962" stroke="#778899" stroke-width="1" stroke-dasharray="3 3"/><path d="M4 34.5H962" stroke="#ff0000" stroke-width="1" stroke-dasharray="9 6 3 6"/><path d="M4 45.5H962" stroke="#ff0000" stroke-width="1" stroke-dasharray="9 6 3 6"/><path d="M4 50.5H962" stroke="#ff0000" stroke-width="1" stroke-dasharray="9 6 3 6"/><path d="M4 40.5H962" stroke="#32cd32" stroke-width="1" stroke-dasharray="9 6 3 6"/><path d="M4 42.5H963" stroke="#8c98aa" stroke-width="1"/><path d="M4.5 59V65M2 61.5h2M5 61.5h2M12.5 59V69M10 61.5h2M13 64.5h2M20.5 61V67M18 63.5h2M21 64.5h2M28.5 61V67M26 64.5h2M29 63.5h2M36.5 60V66M34 63.5h2M37 62.5h2M44.5 57V65M42 62.5h2M45 59.5h2M52.5 55V83M50 56.5h2M53 79.5h2M60.5 76V95M58 78.5h2M61 93.5h2M68.5 89V114M66 93.5h2M69 106.5h2M76.5 100V125M74 106.5h2M77 106.5h2M84.5 92V110M82 106.5h2M85 101.5h2M92.5 99V112M90 101.5h2M93 101.5h2M100.5 85V102M98 101.5h2M101 89.5h2M108.5 84V94M106 88.5h2M109 87.5h2M116.5 81V98M114 87.5h2M117 95.5h2M124.5 94V109M122 95.5h2M125 103.5h2M132.5 97V107M130 102.5h2M133 105.5h2M140.5 104V120M138 105.5h2M141 110.5h2M148.5 107V118M146 111.5h2M149 111.5h2M156.5 106V116M154 110.5h2M157 110.5h2M164.5 105V114M162 109.5h2M165 109.5h2M172.5 104V112M170 109.5h2M173 107.5h2M180.5 103V110M178 105.5h2M181 107.5h2M188.5 105V112M186 107.5h2M189 109.5h2M196.5 106V114M194 109.5h2M197 109.5h2M204.5 104V114M202 110.5h2M205 109.5h2M212.5 108V120M210 109.5h2M213 115.5h2M220.5 109V120M218 115.5h2M221 111.5h2M228.5 107V114M226 111.5h2M229 107.5h2M236.5 99V115M234 107.5h2M237 99.5h2M244.5 85V104M242 99.5h2M245 87.5h2M252.5 69V94M250 87.5h2M253 74.5h2M260.5 70V90M258 74.5h2M261 71.5h2M268.5 66V82M266 71.5h2M269 67.5h2M276.5 61V76M274 67.5h2M277 61.5h2M284.5 54V66M282 61.5h2M285 57.5h2M292.5 50V66M290 57.5h2M293 63.5h2M300.5 59V70M298 63.5h2M301 68.5h2M308.5 65V81M306 67.5h2M309 70.5h2M316.5 35V72M314 71.5h2M317 43.5h2M324.5 41V50M322 43.5h2M325 43.5h2M332.5 41V50M330 43.5h2M333 49.5h2M340.5 47V54M338 49.5h2M341 47.5h2M348.5 43V50M346 47.5h2M349 43.5h2M356.5 39V46M354 43.5h2M357 43.5h2M364.5 39V46M362 43.5h2M365 40.5h2M372.5 39V44M370 40.5h2M373 41.5h2M380.5 39V44M378 41.5h2M381 41.5h2M388.5 40V48M386 41.5h2M389 43.5h2M396.5 43V52M394 43.5h2M397 47.5h2M404.5 45V50M402 47.5h2M405 45.5h2M412.5 37V46M410 45.5h2M413 40.5h2M420.5 39V46M418 40.5h2M421 41.5h2M428.5 29V46M426 41.5h2M429 33.5h2M436.5 23V44M434 33.5h2M437 31.5h2M444.5 13V36M442 31.5h2M445 16.5h2M452.5 10V24M450 16.5h2M453 12.5h2M460.5 10V29M458 12.5h2M461 21.5h2M468.5 20V38M466 21.5h2M469 35.5h2M476.5 19V36M474 35.5h2M477 19.5h2M484.5 19V42M482 19.5h2M485 37.5h2M492.5 36V52M490 37.5h2M493 51.5h2M500.5 32V52M498 51.5h2M501 39.5h2M508.5 23V56M506 39.5h2M509 40.5h2M516.5 35V48M514 40.5h2M517 39.5h2M524.5 28V40M522 39.5h2M525 35.5h2M532.5 26V39M530 35.5h2M533 31.5h2M540.5 25V34M538 31.5h2M541 29.5h2M548.5 24V31M546 29.5h2M549 26.5h2" stroke="#00ff00" stroke-width="1" fill="none"/><clipPath id="fr"><rect x="4" y="3" width="958" height="124"/></clipPath><g clip-path="url(#fr)"><g fill="#8b7b6b" stroke="#778899" stroke-width="2"><rect x="544" y="15.5" width="21" height="24" rx="7" ry="7"/><rect x="553" y="7.5" width="22" height="27" rx="7" ry="7"/><rect x="568" y="7.5" width="23" height="33" rx="7" ry="7"/><rect x="592" y="13.5" width="23" height="32" rx="7" ry="7"/><rect x="608" y="20.5" width="21" height="30" rx="7" ry="7"/><rect x="616" y="19.5" width="22" height="33" rx="7" ry="7"/><rect x="625" y="5.5" width="22" height="32" rx="7" ry="7"/><rect x="633" y="14.5" width="20" height="31" rx="7" ry="7"/><rect x="641" y="6.5" width="20" height="33" rx="7" ry="7"/><rect x="648" y="-1.5" width="22" height="32" rx="7" ry="7"/><rect x="657" y="0.5" width="22" height="48" rx="7" ry="7"/><rect x="665" y="16.5" width="21" height="44" rx="7" ry="7"/><rect x="673" y="20.5" width="20" height="25" rx="7" ry="7"/><rect x="681" y="27.5" width="21" height="50" rx="7" ry="7"/><rect x="688" y="16.5" width="21" height="35" rx="7" ry="7"/><rect x="697" y="16.5" width="22" height="32" rx="7" ry="7"/><rect x="704" y="23.5" width="22" height="33" rx="7" ry="7"/><rect x="728" y="23.5" width="21" height="30" rx="7" ry="7"/><rect x="737" y="23.5" width="22" height="34" rx="7" ry="7"/></g><g fill="#8b7b6b"><rect x="544" y="15.5" width="21" height="24" rx="7" ry="7"/><rect x="553" y="7.5" width="22" height="27" rx="7" ry="7"/><rect x="568" y="7.5" width="23" height="33" rx="7" ry="7"/><rect x="592" y="13.5" width="23" height="32" rx="7" ry="7"/><rect x="608" y="20.5" width="21" height="30" rx="7" ry="7"/><rect x="616" y="19.5" width="22" height="33" rx="7" ry="7"/><rect x="625" y="5.5" width="22" height="32" rx="7" ry="7"/><rect x="633" y="14.5" width="20" height="31" rx="7" ry="7"/><rect x="641" y="6.5" width="20" height="33" rx="7" ry="7"/><rect x="648" y="-1.5" width="22" height="32" rx="7" ry="7"/><rect x="657" y="0.5" width="22" height="48" rx="7" ry="7"/><rect x="665" y="16.5" width="21" height="44" rx="7" ry="7"/><rect x="673" y="20.5" width="20" height="25" rx="7" ry="7"/><rect x="681" y="27.5" width="21" height="50" rx="7" ry="7"/><rect x="688" y="16.5" width="21" height="35" rx="7" ry="7"/><rect x="697" y="16.5" width="22" height="32" rx="7" ry="7"/><rect x="704" y="23.5" width="22" height="33" rx="7" ry="7"/><rect x="728" y="23.5" width="21" height="30" rx="7" ry="7"/><rect x="737" y="23.5" width="22" height="34" rx="7" ry="7"/></g><g fill="none" stroke="#7f8288" stroke-width="1"><rect x="547" y="19" width="15" height="17" rx="4" ry="4"/><rect x="556" y="11" width="16" height="20" rx="4" ry="4"/><rect x="571" y="11" width="17" height="26" rx="4" ry="4"/><rect x="595" y="17" width="17" height="25" rx="4" ry="4"/><rect x="611" y="24" width="15" height="23" rx="4" ry="4"/><rect x="619" y="23" width="16" height="26" rx="4" ry="4"/><rect x="628" y="9" width="16" height="25" rx="4" ry="4"/><rect x="636" y="18" width="14" height="24" rx="4" ry="4"/><rect x="644" y="10" width="14" height="26" rx="4" ry="4"/><rect x="651" y="2" width="16" height="25" rx="4" ry="4"/><rect x="660" y="4" width="16" height="41" rx="4" ry="4"/><rect x="668" y="20" width="15" height="37" rx="4" ry="4"/><rect x="676" y="24" width="14" height="18" rx="4" ry="4"/><rect x="684" y="31" width="15" height="43" rx="4" ry="4"/><rect x="691" y="20" width="15" height="28" rx="4" ry="4"/><rect x="700" y="20" width="16" height="25" rx="4" ry="4"/><rect x="707" y="27" width="16" height="26" rx="4" ry="4"/><rect x="731" y="27" width="15" height="23" rx="4" ry="4"/><rect x="740" y="27" width="16" height="27" rx="4" ry="4"/></g><path d="M587 34.5h9M723 34.5h8M754 34.5h6M723 45.5h8M754 45.5h7" stroke="#ff0000" stroke-width="1"/><rect x="550" y="22" width="9" height="11" fill="#ffffff"/><path d="M550.5 25h2.5v-2l3.5 3.5-3.5 3.5v-2h-2.5z" fill="#008000"/><path d="M558.5 23v6l-4-2.5z" fill="#daa520"/><path d="M552 20.5h7M556 29.5h6M551 34.5h7" stroke="#0000ff" stroke-width="1"/><rect x="559" y="14" width="10" height="14" fill="#ffffff"/><path d="M559.5 17h2.5v-2l3.5 3.5-3.5 3.5v-2h-2.5z" fill="#ff0000"/><path d="M565 18.5l3-3v6z" fill="#ff0000"/><path d="M559.5 24h2.5v-2l3.5 3.5-3.5 3.5v-2h-2.5z" fill="#008000"/><path d="M568.5 22v6l-4-2.5z" fill="#daa520"/><path d="M561 12.5h7M566 21.5h6M560 29.5h7" stroke="#0000ff" stroke-width="1"/><rect x="574" y="14" width="11" height="20" fill="#ffffff"/><path d="M574.5 17h2.5v-2l3.5 3.5-3.5 3.5v-2h-2.5z" fill="#008000"/><path d="M584.5 15v6l-4-2.5z" fill="#daa520"/><path d="M574.5 25h2.5v-2l3.5 3.5-3.5 3.5v-2h-2.5z" fill="#ff0000"/><path d="M584.5 23v6l-4-2.5z" fill="#daa520"/><path d="M576 12.5h7M582 21.5h6M575 35.5h7" stroke="#0000ff" stroke-width="1"/><rect x="598" y="20" width="11" height="19" fill="#ffffff"/><path d="M598.5 23h2.5v-2l3.5 3.5-3.5 3.5v-2h-2.5z" fill="#ff0000"/><path d="M608.5 21v6l-4-2.5z" fill="#daa520"/><path d="M598.5 30h2.5v-2l3.5 3.5-3.5 3.5v-2h-2.5z" fill="#008000"/><path d="M605 31.5l3-3v6z" fill="#008000"/><path d="M600 18.5h7M606 27.5h6M599 40.5h7" stroke="#0000ff" stroke-width="1"/><rect x="614" y="27" width="9" height="17" fill="#ffffff"/><path d="M614.5 30h2.5v-2l3.5 3.5-3.5 3.5v-2h-2.5z" fill="#008000"/><path d="M619 31.5l3-3v6z" fill="#008000"/><path d="M614.5 38h2.5v-2l3.5 3.5-3.5 3.5v-2h-2.5z" fill="#ff0000"/><path d="M622.5 36v6l-4-2.5z" fill="#daa520"/><path d="M616 25.5h7M620 34.5h6M615 45.5h7" stroke="#0000ff" stroke-width="1"/><rect x="622" y="26" width="10" height="20" fill="#ffffff"/><path d="M622.5 29h2.5v-2l3.5 3.5-3.5 3.5v-2h-2.5z" fill="#ff0000"/><path d="M631.5 27v6l-4-2.5z" fill="#daa520"/><path d="M622.5 36h2.5v-2l3.5 3.5-3.5 3.5v-2h-2.5z" fill="#008000"/><path d="M631.5 34v6l-4-2.5z" fill="#daa520"/><path d="M624 24.5h7M629 33.5h6M623 47.5h7" stroke="#0000ff" stroke-width="1"/><rect x="631" y="12" width="10" height="19" fill="#ffffff"/><path d="M631.5 15h2.5v-2l3.5 3.5-3.5 3.5v-2h-2.5z" fill="#008000"/><path d="M640.5 13v6l-4-2.5z" fill="#daa520"/><path d="M631.5 23h2.5v-2l3.5 3.5-3.5 3.5v-2h-2.5z" fill="#ff0000"/><path d="M637 24.5l3-3v6z" fill="#ff0000"/><path d="M633 10.5h7M638 19.5h6M632 32.5h7" stroke="#0000ff" stroke-width="1"/><rect x="639" y="21" width="8" height="18" fill="#ffffff"/><path d="M639.5 24h2.5v-2l3.5 3.5-3.5 3.5v-2h-2.5z" fill="#ff0000"/><path d="M643 25.5l3-3v6z" fill="#ff0000"/><path d="M639.5 31h2.5v-2l3.5 3.5-3.5 3.5v-2h-2.5z" fill="#008000"/><path d="M646.5 29v6l-4-2.5z" fill="#daa520"/><path d="M641 19.5h7M644 28.5h6M640 40.5h7" stroke="#0000ff" stroke-width="1"/><rect x="647" y="13" width="8" height="20" fill="#ffffff"/><path d="M647.5 16h2.5v-2l3.5 3.5-3.5 3.5v-2h-2.5z" fill="#008000"/><path d="M654.5 14v6l-4-2.5z" fill="#daa520"/><path d="M647.5 24h2.5v-2l3.5 3.5-3.5 3.5v-2h-2.5z" fill="#ff0000"/><path d="M654.5 22v6l-4-2.5z" fill="#daa520"/><path d="M649 11.5h7M652 20.5h6M648 34.5h7" stroke="#0000ff" stroke-width="1"/><rect x="654" y="5" width="10" height="19" fill="#ffffff"/><path d="M654.5 8h2.5v-2l3.5 3.5-3.5 3.5v-2h-2.5z" fill="#ff0000"/><path d="M663.5 6v6l-4-2.5z" fill="#daa520"/><path d="M654.5 15h2.5v-2l3.5 3.5-3.5 3.5v-2h-2.5z" fill="#008000"/><path d="M660 16.5l3-3v6z" fill="#008000"/><path d="M656 3.5h7M661 12.5h6M655 25.5h7" stroke="#0000ff" stroke-width="1"/><rect x="663" y="7" width="10" height="35" fill="#ffffff"/><path d="M663.5 10h2.5v-2l3.5 3.5-3.5 3.5v-2h-2.5z" fill="#008000"/><path d="M669 11.5l3-3v6z" fill="#008000"/><path d="M663.5 18h2.5v-2l3.5 3.5-3.5 3.5v-2h-2.5z" fill="#ff0000"/><path d="M672.5 16v6l-4-2.5z" fill="#daa520"/><path d="M663.5 25h2.5v-2l3.5 3.5-3.5 3.5v-2h-2.5z" fill="#008000"/><path d="M672.5 23v6l-4-2.5z" fill="#daa520"/><path d="M663.5 33h2.5v-2l3.5 3.5-3.5 3.5v-2h-2.5z" fill="#ff0000"/><path d="M669 34.5l3-3v6z" fill="#ff0000"/><path d="M665 5.5h7M670 14.5h6M664 43.5h7" stroke="#0000ff" stroke-width="1"/><rect x="671" y="23" width="9" height="31" fill="#ffffff"/><path d="M671.5 26h2.5v-2l3.5 3.5-3.5 3.5v-2h-2.5z" fill="#ff0000"/><path d="M679.5 24v6l-4-2.5z" fill="#daa520"/><path d="M671.5 33h2.5v-2l3.5 3.5-3.5 3.5v-2h-2.5z" fill="#008000"/><path d="M679.5 31v6l-4-2.5z" fill="#daa520"/><path d="M671.5 41h2.5v-2l3.5 3.5-3.5 3.5v-2h-2.5z" fill="#ff0000"/><path d="M676 42.5l3-3v6z" fill="#ff0000"/><path d="M671.5 48h2.5v-2l3.5 3.5-3.5 3.5v-2h-2.5z" fill="#008000"/><path d="M679.5 46v6l-4-2.5z" fill="#daa520"/><path d="M673 21.5h7M677 30.5h6M672 55.5h7" stroke="#0000ff" stroke-width="1"/><rect x="679" y="27" width="8" height="12" fill="#ffffff"/><path d="M679.5 30h2.5v-2l3.5 3.5-3.5 3.5v-2h-2.5z" fill="#008000"/><path d="M686.5 28v6l-4-2.5z" fill="#daa520"/><path d="M681 25.5h7M684 34.5h6M680 40.5h7" stroke="#0000ff" stroke-width="1"/><rect x="687" y="34" width="9" height="37" fill="#ffffff"/><path d="M687.5 37h2.5v-2l3.5 3.5-3.5 3.5v-2h-2.5z" fill="#ff0000"/><path d="M692 38.5l3-3v6z" fill="#ff0000"/><path d="M687.5 44h2.5v-2l3.5 3.5-3.5 3.5v-2h-2.5z" fill="#008000"/><path d="M695.5 42v6l-4-2.5z" fill="#daa520"/><path d="M687.5 52h2.5v-2l3.5 3.5-3.5 3.5v-2h-2.5z" fill="#ff0000"/><path d="M695.5 50v6l-4-2.5z" fill="#daa520"/><path d="M687.5 59h2.5v-2l3.5 3.5-3.5 3.5v-2h-2.5z" fill="#008000"/><path d="M692 60.5l3-3v6z" fill="#008000"/><path d="M687.5 67h2.5v-2l3.5 3.5-3.5 3.5v-2h-2.5z" fill="#ff0000"/><path d="M695.5 65v6l-4-2.5z" fill="#daa520"/><path d="M689 32.5h7M693 41.5h6M688 72.5h7" stroke="#0000ff" stroke-width="1"/><rect x="694" y="23" width="9" height="22" fill="#ffffff"/><path d="M694.5 26h2.5v-2l3.5 3.5-3.5 3.5v-2h-2.5z" fill="#008000"/><path d="M702.5 24v6l-4-2.5z" fill="#daa520"/><path d="M694.5 34h2.5v-2l3.5 3.5-3.5 3.5v-2h-2.5z" fill="#ff0000"/><path d="M702.5 32v6l-4-2.5z" fill="#daa520"/><path d="M694.5 41h2.5v-2l3.5 3.5-3.5 3.5v-2h-2.5z" fill="#008000"/><path d="M699 42.5l3-3v6z" fill="#008000"/><path d="M696 21.5h7M700 30.5h6M695 46.5h7" stroke="#0000ff" stroke-width="1"/><rect x="703" y="23" width="10" height="19" fill="#ffffff"/><path d="M703.5 26h2.5v-2l3.5 3.5-3.5 3.5v-2h-2.5z" fill="#ff0000"/><path d="M712.5 24v6l-4-2.5z" fill="#daa520"/><path d="M703.5 33h2.5v-2l3.5 3.5-3.5 3.5v-2h-2.5z" fill="#008000"/><path d="M709 34.5l3-3v6z" fill="#008000"/><path d="M705 21.5h7M710 30.5h6M704 43.5h7" stroke="#0000ff" stroke-width="1"/><rect x="710" y="30" width="10" height="20" fill="#ffffff"/><path d="M710.5 33h2.5v-2l3.5 3.5-3.5 3.5v-2h-2.5z" fill="#008000"/><path d="M716 34.5l3-3v6z" fill="#008000"/><path d="M710.5 41h2.5v-2l3.5 3.5-3.5 3.5v-2h-2.5z" fill="#ff0000"/><path d="M719.5 39v6l-4-2.5z" fill="#daa520"/><path d="M712 28.5h7M717 37.5h6M711 51.5h7" stroke="#0000ff" stroke-width="1"/><rect x="734" y="30" width="9" height="17" fill="#ffffff"/><path d="M734.5 33h2.5v-2l3.5 3.5-3.5 3.5v-2h-2.5z" fill="#ff0000"/><path d="M742.5 31v6l-4-2.5z" fill="#daa520"/><path d="M734.5 40h2.5v-2l3.5 3.5-3.5 3.5v-2h-2.5z" fill="#008000"/><path d="M742.5 38v6l-4-2.5z" fill="#daa520"/><path d="M736 28.5h7M740 37.5h6M735 48.5h7" stroke="#0000ff" stroke-width="1"/><rect x="743" y="30" width="10" height="21" fill="#ffffff"/><path d="M743.5 33h2.5v-2l3.5 3.5-3.5 3.5v-2h-2.5z" fill="#008000"/><path d="M752.5 31v6l-4-2.5z" fill="#daa520"/><path d="M743.5 41h2.5v-2l3.5 3.5-3.5 3.5v-2h-2.5z" fill="#ff0000"/><path d="M749 42.5l3-3v6z" fill="#ff0000"/><path d="M743.5 48h2.5v-2l3.5 3.5-3.5 3.5v-2h-2.5z" fill="#008000"/><path d="M752.5 46v6l-4-2.5z" fill="#daa520"/><path d="M745 28.5h7M750 37.5h6M744 52.5h7" stroke="#0000ff" stroke-width="1"/></g><path d="M548.5 24v5h3M588.5 25v6M571 20.5h3v4M596.5 24v6h-3M612.5 32v5M723 38.5h4v3h3M753 39.5h5" stroke="#00ff00" stroke-width="1" fill="none"/><path d="M764 3h8l-4 5z" fill="#778899"/><path d="M3.5 2.5H962.5V127.5H3.5z" fill="none" stroke="#ffffff" stroke-width="1"/><path d="M4.5 128v3M68.5 128v3M132.5 128v3M196.5 128v3M260.5 128v3M324.5 128v3M388.5 128v3M452.5 128v3M516.5 128v3M580.5 128v3M644.5 128v3M708.5 128v3" stroke="#ffffff" stroke-width="1"/><path d="M963 25.5h2" stroke="#ffffff" stroke-width="1"/><path d="M963 58.5h2" stroke="#ffffff" stroke-width="1"/><path d="M963 91.5h2" stroke="#ffffff" stroke-width="1"/><path d="M963 124.5h2" stroke="#ffffff" stroke-width="1"/></svg>
<div class="t" style="left:367.20px;top:103px;letter-spacing:-0.376px;line-height:13px;height:13px;font-size:10px;color:#ffffff;">EURUSD,H1  1.16620 1.16639 1.16617 1.16627</div>
<div class="t" style="left:367.20px;top:116px;letter-spacing:-0.483px;line-height:13px;height:13px;font-size:10px;color:#ffffff;">SuplexMarket_Saddam-EA</div>
<div class="t" style="left:370.00px;top:123px;letter-spacing:-0.659px;line-height:13px;height:13px;font-size:10px;color:#ffffff;">#BP IP</div>
<div class="t" style="left:368.00px;top:128px;letter-spacing:-1.188px;line-height:13px;height:13px;font-size:10px;color:#ffffff;">Size Buy Saddam 0.20</div>
<div class="t" style="left:367.50px;top:130px;letter-spacing:-0.901px;line-height:13px;height:13px;font-size:10px;color:#ffffff;">Size Buy 0.20</div>
<div class="t" style="left:369.00px;top:133px;letter-spacing:-1.154px;line-height:13px;height:13px;font-size:10px;color:#ffffff;">#SP IP Sell 0.10</div>
<div class="t" style="left:370.00px;top:136px;letter-spacing:-0.857px;line-height:13px;height:13px;font-size:10px;color:#ffffff;">#BS IP</div>
<div class="t" style="left:367.40px;top:140px;letter-spacing:-0.355px;line-height:13px;height:13px;font-size:10px;color:#ffffff;">Programmed by Kira-h</div>
<div class="t" style="left:367.40px;top:152px;letter-spacing:-0.547px;line-height:13px;height:13px;font-size:10px;color:#ffffff;">hassan.mb@hotmail.com</div>
<div class="t" style="left:367.40px;top:164px;letter-spacing:-0.349px;line-height:13px;height:13px;font-size:10px;color:#ffffff;">fxprg.com/vb/showthread.php?t=33803</div>
<div class="t" style="left:367.40px;top:176px;letter-spacing:-0.280px;line-height:13px;height:13px;font-size:10px;color:#ffffff;">Copyright ©2018</div>
<div class="a" style="left:367px;top:195px;width:144px;height:1px;background:repeating-linear-gradient(to right,#fff 0,#fff 2px,#c8c0a0 2px,#c8c0a0 3px);"></div>
<div class="t" style="left:362.50px;top:229px;letter-spacing:-0.303px;line-height:13px;height:13px;font-size:10px;color:#ffffff;">29 May 2018</div>
<div class="t" style="left:426.50px;top:229px;letter-spacing:-0.198px;line-height:13px;height:13px;font-size:10px;color:#ffffff;">29 May 11:00</div>
<div class="t" style="left:490.50px;top:229px;letter-spacing:-0.259px;line-height:13px;height:13px;font-size:10px;color:#ffffff;">29 May 19:00</div>
<div class="t" style="left:554.50px;top:229px;letter-spacing:-0.259px;line-height:13px;height:13px;font-size:10px;color:#ffffff;">30 May 03:00</div>
<div class="t" style="left:618.50px;top:229px;letter-spacing:-0.198px;line-height:13px;height:13px;font-size:10px;color:#ffffff;">30 May 11:00</div>
<div class="t" style="left:682.50px;top:229px;letter-spacing:-0.259px;line-height:13px;height:13px;font-size:10px;color:#ffffff;">30 May 19:00</div>
<div class="t" style="left:746.50px;top:229px;letter-spacing:-0.259px;line-height:13px;height:13px;font-size:10px;color:#ffffff;">31 May 03:00</div>
<div class="t" style="left:810.50px;top:229px;letter-spacing:-0.198px;line-height:13px;height:13px;font-size:10px;color:#ffffff;">31 May 11:00</div>
<div class="t" style="left:874.50px;top:229px;letter-spacing:-0.259px;line-height:13px;height:13px;font-size:10px;color:#ffffff;">31 May 19:00</div>
<div class="t" style="left:938.50px;top:229px;letter-spacing:-0.389px;line-height:13px;height:13px;font-size:10px;color:#ffffff;">1 Jun 03:00</div>
<div class="t" style="left:1002.50px;top:229px;letter-spacing:-0.322px;line-height:13px;height:13px;font-size:10px;color:#ffffff;">1 Jun 11:00</div>
<div class="t" style="left:1066.50px;top:229px;letter-spacing:-0.389px;line-height:13px;height:13px;font-size:10px;color:#ffffff;">1 Jun 19:00</div>
<div class="t" style="left:1327.30px;top:118px;letter-spacing:-0.522px;line-height:13px;height:13px;font-size:10px;color:#ffffff;">1.16960</div>
<div class="t" style="left:1327.30px;top:151px;letter-spacing:-0.522px;line-height:13px;height:13px;font-size:10px;color:#ffffff;">1.16330</div>
<div class="t" style="left:1327.30px;top:184px;letter-spacing:-0.522px;line-height:13px;height:13px;font-size:10px;color:#ffffff;">1.15715</div>
<div class="t" style="left:1327.30px;top:217px;letter-spacing:-0.522px;line-height:13px;height:13px;font-size:10px;color:#ffffff;">1.15085</div>
<div class="a" style="left:1323px;top:136px;width:41px;height:11px;background:#ffffff;"></div>
<div class="t" style="left:1327.30px;top:135px;letter-spacing:-0.522px;line-height:13px;height:13px;font-size:10px;color:#000;">1.16627</div>
<div class="hl" style="left:359px;top:247px;width:1005px;background:#ffffff"></div>
<div class="hl" style="left:359px;top:248px;width:1005px;background:#ffffff"></div>
<div class="hl" style="left:359px;top:249px;width:1005px;background:#000000"></div>
<div class="vl" style="left:358px;top:249px;height:20px;background:#606060"></div>
<div class="hl" style="left:356px;top:268px;width:3px;background:#a0a0a0"></div>
<div class="t" style="left:375.50px;top:251px;letter-spacing:-1.073px;color:#707076;">EURUSD,H1</div>
<div class="t" style="left:459.50px;top:251px;letter-spacing:-0.983px;color:#707076;">GBPUSD,H1</div>
<div class="t" style="left:542.70px;top:251px;letter-spacing:-0.797px;color:#707076;">USDJPY,H1</div>
<div class="t" style="left:623.70px;top:251px;letter-spacing:-1.017px;color:#707076;">GBPJPY,H1</div>
<div class="t" style="left:703.00px;top:251px;letter-spacing:-0.866px;color:#707076;">EURGBP,H1</div>
<div class="t" style="left:787.00px;top:251px;letter-spacing:-0.866px;color:#707076;">EURGBP,H1</div>
<div class="t" style="left:871.70px;top:251px;letter-spacing:-1.151px;color:#707076;">EURUSD,H1</div>
<div class="t" style="left:954.00px;top:251px;letter-spacing:-0.551px;color:#707076;">USDCHF,H1</div>
<div class="t" style="left:1038.80px;top:251px;letter-spacing:-0.549px;color:#707076;">EURUSD,H1 (visual)</div>
<div class="t" style="left:1162.70px;top:251px;letter-spacing:-0.526px;color:#707076;">EURUSD,H1 (visual)</div>
<div class="a" style="left:1287.4px;top:250px;width:41px;height:18px;overflow:hidden;"><div class="t" style="left:0.00px;top:1px;letter-spacing:-1.073px;color:#707076;">EURUSD,H1</div>
</div>
<div class="vl" style="left:448px;top:252px;height:14px;background:#505050"></div>
<div class="vl" style="left:532px;top:252px;height:14px;background:#505050"></div>
<div class="vl" style="left:612px;top:252px;height:14px;background:#505050"></div>
<div class="vl" style="left:692px;top:252px;height:14px;background:#505050"></div>
<div class="vl" style="left:776px;top:252px;height:14px;background:#505050"></div>
<div class="vl" style="left:860px;top:252px;height:14px;background:#505050"></div>
<div class="vl" style="left:944px;top:252px;height:14px;background:#505050"></div>
<div class="vl" style="left:1028px;top:252px;height:14px;background:#505050"></div>
<div class="vl" style="left:1152px;top:252px;height:14px;background:#505050"></div>
<div class="vl" style="left:1276px;top:252px;height:14px;background:#505050"></div>
<svg style="left:1333px;top:254px" width="5" height="8" viewBox="0 0 5 8"><path d="M4.5 0v8L0 4z" fill="#a0a0a0"/></svg>
<svg style="left:1352px;top:254px" width="5" height="8" viewBox="0 0 5 8"><path d="M0 0v8l4.5-4z" fill="#000"/></svg>
<div class="a" style="left:358px;top:269px;width:1008px;height:4px;background:#f8f8f8;"></div>
<div class="hl" style="left:0px;top:269px;width:358px;background:#ffffff"></div>
<svg style="left:4px;top:276px" width="6.4" height="5" viewBox="0 0 6.4 5"><path d="M0.700 0.600L5.7 4.4M5.7 0.600L0.700 4.4" stroke="#000" stroke-width="1.7" fill="none"/></svg>
<div class="a" style="left:5px;top:285px;width:4px;height:7px;background:repeating-linear-gradient(to bottom,#a8a8a8 0,#a8a8a8 1px,transparent 1px,transparent 2px);"></div>
<div class="a" style="left:15px;top:273px;width:1348px;height:22px;background:#ffffff;border:1px solid #a0a0a0;border-right-color:#e0e0e0;border-bottom-color:#e0e0e0;box-sizing:border-box;"></div>
<svg style="left:21px;top:280px" width="8" height="8" viewBox="0 0 8 8"><circle cx="4" cy="4" r="3.3" fill="#b8b8b8" stroke="#808080" stroke-width="0.8"/><circle cx="3.3" cy="3.3" r="1.2" fill="#dcdcdc"/></svg>
<div class="t" style="left:34.20px;top:276px;letter-spacing:-0.533px;">Balance: 3,011.23 USD</div>
<div class="t" style="left:154.20px;top:276px;letter-spacing:-0.169px;">Profit/Loss: 1.99</div>
<div class="t" style="left:244.20px;top:276px;letter-spacing:-0.368px;">Equity: 3,013.22</div>
<div class="t" style="left:331.50px;top:276px;letter-spacing:-0.258px;">Margin: 92.09</div>
<div class="t" style="left:408.00px;top:276px;letter-spacing:-0.359px;">Free margin: 2,921.13</div>
<div class="t" style="left:525.00px;top:276px;letter-spacing:-0.245px;">Margin level: 3272.04%</div>
<div class="hl" style="left:0px;top:298px;width:1366px;background:#a0a0a0"></div>
<div class="hl" style="left:0px;top:299px;width:1366px;background:#ffffff"></div>
<svg style="left:4px;top:306px" width="6.4" height="5" viewBox="0 0 6.4 5"><path d="M0.700 0.600L5.7 4.4M5.7 0.600L0.700 4.4" stroke="#000" stroke-width="1.7" fill="none"/></svg>
<div class="a" style="left:1px;top:317px;width:13px;height:385px;background:#a8c0e0;"></div>
<div class="a" style="left:15px;top:303px;width:1349px;height:377px;background:#ffffff;border:1px solid #a0a0a0;border-bottom:none;border-right-color:#ffffff;box-sizing:border-box;"></div>
<div class="vl" style="left:1363px;top:680px;height:23px;background:#ffffff"></div>
<div class="hl" style="left:15px;top:702px;width:1349px;background:#ffffff"></div>
<div class="a" style="left:16px;top:304px;width:1329px;height:375px;overflow:hidden;"><div class="a" style="left:0px;top:25px;width:1329px;height:18px;background:#ececec;"></div>
<div class="hl" style="left:0px;top:43px;width:1329px;background:#c4c4c4"></div>
<div class="hl" style="left:0px;top:63px;width:1329px;background:#c4c4c4"></div>
<div class="a" style="left:0px;top:64px;width:1329px;height:19px;background:#ececec;"></div>
<div class="hl" style="left:0px;top:83px;width:1329px;background:#c4c4c4"></div>
<div class="hl" style="left:0px;top:103px;width:1329px;background:#c4c4c4"></div>
<div class="a" style="left:0px;top:104px;width:1329px;height:19px;background:#ececec;"></div>
<div class="hl" style="left:0px;top:123px;width:1329px;background:#c4c4c4"></div>
<div class="hl" style="left:0px;top:143px;width:1329px;background:#c4c4c4"></div>
<div class="a" style="left:0px;top:144px;width:1329px;height:19px;background:#ececec;"></div>
<div class="hl" style="left:0px;top:163px;width:1329px;background:#c4c4c4"></div>
<div class="hl" style="left:0px;top:183px;width:1329px;background:#c4c4c4"></div>
<div class="a" style="left:0px;top:184px;width:1329px;height:19px;background:#ececec;"></div>
<div class="hl" style="left:0px;top:203px;width:1329px;background:#c4c4c4"></div>
<div class="hl" style="left:0px;top:223px;width:1329px;background:#c4c4c4"></div>
<div class="a" style="left:0px;top:224px;width:1329px;height:19px;background:#ececec;"></div>
<div class="hl" style="left:0px;top:243px;width:1329px;background:#c4c4c4"></div>
<div class="hl" style="left:0px;top:263px;width:1329px;background:#c4c4c4"></div>
<div class="a" style="left:0px;top:264px;width:1329px;height:19px;background:#ececec;"></div>
<div class="hl" style="left:0px;top:283px;width:1329px;background:#c4c4c4"></div>
<div class="hl" style="left:0px;top:303px;width:1329px;background:#c4c4c4"></div>
<div class="a" style="left:0px;top:304px;width:1329px;height:19px;background:#ececec;"></div>
<div class="hl" style="left:0px;top:323px;width:1329px;background:#c4c4c4"></div>
<div class="hl" style="left:0px;top:343px;width:1329px;background:#c4c4c4"></div>
<div class="a" style="left:0px;top:344px;width:1329px;height:19px;background:#ececec;"></div>
<div class="hl" style="left:0px;top:363px;width:1329px;background:#c4c4c4"></div>
<div class="hl" style="left:0px;top:383px;width:1329px;background:#c4c4c4"></div>
<div class="hl" style="left:0px;top:24px;width:1329px;background:#c4c4c4"></div>
<div class="vl" style="left:87px;top:0px;height:24px;background:#e2e2e2"></div>
<div class="vl" style="left:86px;top:25px;height:360px;background:#c4c4c4"></div>
<div class="vl" style="left:308px;top:0px;height:24px;background:#e2e2e2"></div>
<div class="vl" style="left:307px;top:25px;height:360px;background:#c4c4c4"></div>
<div class="vl" style="left:407px;top:0px;height:24px;background:#e2e2e2"></div>
<div class="vl" style="left:406px;top:25px;height:360px;background:#c4c4c4"></div>
<div class="vl" style="left:506px;top:0px;height:24px;background:#e2e2e2"></div>
<div class="vl" style="left:505px;top:25px;height:360px;background:#c4c4c4"></div>
<div class="vl" style="left:594px;top:0px;height:24px;background:#e2e2e2"></div>
<div class="vl" style="left:593px;top:25px;height:360px;background:#c4c4c4"></div>
<div class="vl" style="left:726px;top:0px;height:24px;background:#e2e2e2"></div>
<div class="vl" style="left:725px;top:25px;height:360px;background:#c4c4c4"></div>
<div class="vl" style="left:858px;top:0px;height:24px;background:#e2e2e2"></div>
<div class="vl" style="left:857px;top:25px;height:360px;background:#c4c4c4"></div>
<div class="vl" style="left:990px;top:0px;height:24px;background:#e2e2e2"></div>
<div class="vl" style="left:989px;top:25px;height:360px;background:#c4c4c4"></div>
<div class="vl" style="left:1156px;top:0px;height:24px;background:#e2e2e2"></div>
<div class="vl" style="left:1155px;top:25px;height:360px;background:#c4c4c4"></div>
<div class="t" style="left:6.00px;top:4px;letter-spacing:0.328px;">#</div>
<div class="t" style="left:276.80px;top:4px;letter-spacing:-0.009px;">Time</div>
<div class="t" style="left:378.20px;top:4px;letter-spacing:-0.554px;">Type</div>
<div class="t" style="left:471.70px;top:4px;letter-spacing:-0.274px;">Order</div>
<div class="t" style="left:569.50px;top:4px;letter-spacing:-0.961px;">Size</div>
<div class="t" style="left:695.80px;top:4px;letter-spacing:-0.429px;">Price</div>
<div class="t" style="left:830.50px;top:4px;letter-spacing:-0.431px;">S / L</div>
<div class="t" style="left:961.50px;top:4px;letter-spacing:-0.319px;">T / P</div>
<div class="t" style="left:1120.50px;top:4px;letter-spacing:0.500px;">Profit</div>
<div class="t" style="left:1282.60px;top:4px;letter-spacing:-0.394px;">Balance</div>
<svg style="left:3px;top:27px" width="15" height="15" viewBox="0 0 15 15"><path d="M1.500 0.500h6.500l3 3v9.500h-9.500a1 1 0 0 1-1-1v-10.500a1 1 0 0 1 1-1z" fill="#fbfbfb" stroke="#686868"/><path d="M8 0.500v3h3" fill="none" stroke="#686868" stroke-width="0.9"/><circle cx="10.500" cy="11.300" r="3.200" fill="#f04818" stroke="#b83008" stroke-width="0.7"/><circle cx="9.700" cy="10.300" r="1" fill="#ffffff" fill-opacity="0.45"/></svg>
<div class="t" style="left:22.50px;top:26px;letter-spacing:-1.672px;">1</div>
<div class="t" style="left:221.60px;top:26px;letter-spacing:-0.611px;">2018.06.01 00:00</div>
<div class="t" style="left:387.70px;top:26px;letter-spacing:-0.379px;">sell</div>
<div class="t" style="left:497.40px;top:26px;letter-spacing:-1.672px;">1</div>
<div class="t" style="left:570.50px;top:26px;letter-spacing:-0.711px;">0.10</div>
<div class="t" style="left:684.30px;top:26px;letter-spacing:-0.723px;">1.16879</div>
<div class="t" style="left:816.30px;top:26px;letter-spacing:-0.723px;">1.16979</div>
<div class="t" style="left:948.30px;top:26px;letter-spacing:-0.723px;">1.16779</div>
<svg style="left:3px;top:47px" width="15" height="15" viewBox="0 0 15 15"><path d="M1.500 0.500h6.500l3 3v9.500h-9.500a1 1 0 0 1-1-1v-10.500a1 1 0 0 1 1-1z" fill="#fbfbfb" stroke="#686868"/><path d="M8 0.500v3h3" fill="none" stroke="#686868" stroke-width="0.9"/><path d="M2.500 3.500h5M5 3.500v5.500" stroke="#303030" stroke-width="1.2" fill="none"/><circle cx="10.500" cy="11.300" r="3.200" fill="#1e98f0" stroke="#1060b0" stroke-width="0.7"/><circle cx="9.700" cy="10.300" r="1" fill="#ffffff" fill-opacity="0.45"/></svg>
<div class="t" style="left:22.50px;top:46px;letter-spacing:-1.672px;">2</div>
<div class="t" style="left:221.60px;top:46px;letter-spacing:-0.611px;">2018.06.01 00:02</div>
<div class="t" style="left:358.70px;top:46px;letter-spacing:0.020px;">buy stop</div>
<div class="t" style="left:497.40px;top:46px;letter-spacing:-1.672px;">2</div>
<div class="t" style="left:570.50px;top:46px;letter-spacing:-0.711px;">0.20</div>
<div class="t" style="left:684.30px;top:46px;letter-spacing:-0.723px;">1.16979</div>
<div class="t" style="left:816.30px;top:46px;letter-spacing:-0.723px;">1.16879</div>
<div class="t" style="left:948.30px;top:46px;letter-spacing:-0.723px;">1.17079</div>
<svg style="left:3px;top:67px" width="13" height="14" viewBox="0 0 13 14"><rect x="0.5" y="0.5" width="11.500" height="13" rx="1.5" fill="#ffffff" stroke="#686868"/><path d="M6.500 10.400l-3.600-3.900h1.900v-3h3.400v3h1.900z" fill="#ff5020" stroke="#d02808" stroke-width="0.9" stroke-linejoin="round"/></svg>
<div class="t" style="left:22.50px;top:66px;letter-spacing:-1.672px;">3</div>
<div class="t" style="left:221.60px;top:66px;letter-spacing:-0.611px;">2018.06.01 01:15</div>
<div class="t" style="left:389.70px;top:66px;letter-spacing:0.833px;">s/l</div>
<div class="t" style="left:497.40px;top:66px;letter-spacing:-1.672px;">1</div>
<div class="t" style="left:570.50px;top:66px;letter-spacing:-0.711px;">0.10</div>
<div class="t" style="left:684.30px;top:66px;letter-spacing:-0.723px;">1.16979</div>
<div class="t" style="left:816.30px;top:66px;letter-spacing:-0.723px;">1.16979</div>
<div class="t" style="left:948.30px;top:66px;letter-spacing:-0.723px;">1.16779</div>
<div class="t" style="left:1121.80px;top:66px;letter-spacing:-0.503px;">-10.47</div>
<div class="t" style="left:1292.40px;top:66px;letter-spacing:-0.781px;">989.53</div>
<svg style="left:3px;top:87px" width="15" height="15" viewBox="0 0 15 15"><path d="M1.500 0.500h6.500l3 3v9.500h-9.500a1 1 0 0 1-1-1v-10.500a1 1 0 0 1 1-1z" fill="#fbfbfb" stroke="#686868"/><path d="M8 0.500v3h3" fill="none" stroke="#686868" stroke-width="0.9"/><circle cx="10.500" cy="11.300" r="3.200" fill="#1e98f0" stroke="#1060b0" stroke-width="0.7"/><circle cx="9.700" cy="10.300" r="1" fill="#ffffff" fill-opacity="0.45"/></svg>
<div class="t" style="left:22.50px;top:86px;letter-spacing:-1.672px;">4</div>
<div class="t" style="left:221.60px;top:86px;letter-spacing:-0.611px;">2018.06.01 01:15</div>
<div class="t" style="left:384.70px;top:86px;letter-spacing:0.052px;">buy</div>
<div class="t" style="left:497.40px;top:86px;letter-spacing:-1.672px;">2</div>
<div class="t" style="left:570.50px;top:86px;letter-spacing:-0.711px;">0.20</div>
<div class="t" style="left:684.30px;top:86px;letter-spacing:-0.723px;">1.16979</div>
<div class="t" style="left:816.30px;top:86px;letter-spacing:-0.723px;">1.16879</div>
<div class="t" style="left:948.30px;top:86px;letter-spacing:-0.723px;">1.17079</div>
<svg style="left:3px;top:107px" width="13" height="14" viewBox="0 0 13 14"><rect x="0.5" y="0.5" width="11.500" height="13" rx="1.5" fill="#ffffff" stroke="#686868"/><path d="M6.500 3.300l3.600 3.900H8.200v3H4.800v-3H2.900z" fill="#30c030" stroke="#108010" stroke-width="0.9" stroke-linejoin="round"/></svg>
<div class="t" style="left:22.50px;top:106px;letter-spacing:-1.672px;">5</div>
<div class="t" style="left:221.60px;top:106px;letter-spacing:-0.611px;">2018.06.01 01:15</div>
<div class="t" style="left:376.70px;top:106px;letter-spacing:-0.103px;">close</div>
<div class="t" style="left:497.40px;top:106px;letter-spacing:-1.672px;">2</div>
<div class="t" style="left:570.50px;top:106px;letter-spacing:-0.711px;">0.20</div>
<div class="t" style="left:684.30px;top:106px;letter-spacing:-0.723px;">1.16992</div>
<div class="t" style="left:816.30px;top:106px;letter-spacing:-0.723px;">1.16879</div>
<div class="t" style="left:948.30px;top:106px;letter-spacing:-0.723px;">1.17079</div>
<div class="t" style="left:1132.80px;top:106px;letter-spacing:-0.836px;">1.66</div>
<div class="t" style="left:1292.40px;top:106px;letter-spacing:-0.781px;">991.19</div>
<svg style="left:3px;top:127px" width="15" height="15" viewBox="0 0 15 15"><path d="M1.500 0.500h6.500l3 3v9.500h-9.500a1 1 0 0 1-1-1v-10.500a1 1 0 0 1 1-1z" fill="#fbfbfb" stroke="#686868"/><path d="M8 0.500v3h3" fill="none" stroke="#686868" stroke-width="0.9"/><circle cx="10.500" cy="11.300" r="3.200" fill="#f04818" stroke="#b83008" stroke-width="0.7"/><circle cx="9.700" cy="10.300" r="1" fill="#ffffff" fill-opacity="0.45"/></svg>
<div class="t" style="left:22.50px;top:126px;letter-spacing:-1.672px;">6</div>
<div class="t" style="left:221.60px;top:126px;letter-spacing:-0.611px;">2018.06.01 01:15</div>
<div class="t" style="left:387.70px;top:126px;letter-spacing:-0.379px;">sell</div>
<div class="t" style="left:497.40px;top:126px;letter-spacing:-1.672px;">3</div>
<div class="t" style="left:570.50px;top:126px;letter-spacing:-0.711px;">0.10</div>
<div class="t" style="left:684.30px;top:126px;letter-spacing:-0.723px;">1.16992</div>
<div class="t" style="left:816.30px;top:126px;letter-spacing:-0.723px;">1.17092</div>
<div class="t" style="left:948.30px;top:126px;letter-spacing:-0.723px;">1.16892</div>
<svg style="left:3px;top:147px" width="15" height="15" viewBox="0 0 15 15"><path d="M1.500 0.500h6.500l3 3v9.500h-9.500a1 1 0 0 1-1-1v-10.500a1 1 0 0 1 1-1z" fill="#fbfbfb" stroke="#686868"/><path d="M8 0.500v3h3" fill="none" stroke="#686868" stroke-width="0.9"/><path d="M2.500 3.500h5M5 3.500v5.500" stroke="#303030" stroke-width="1.2" fill="none"/><circle cx="10.500" cy="11.300" r="3.200" fill="#1e98f0" stroke="#1060b0" stroke-width="0.7"/><circle cx="9.700" cy="10.300" r="1" fill="#ffffff" fill-opacity="0.45"/></svg>
<div class="t" style="left:22.50px;top:146px;letter-spacing:-1.672px;">7</div>
<div class="t" style="left:221.60px;top:146px;letter-spacing:-0.611px;">2018.06.01 01:17</div>
<div class="t" style="left:358.70px;top:146px;letter-spacing:0.020px;">buy stop</div>
<div class="t" style="left:497.40px;top:146px;letter-spacing:-1.672px;">4</div>
<div class="t" style="left:570.50px;top:146px;letter-spacing:-0.711px;">0.20</div>
<div class="t" style="left:684.30px;top:146px;letter-spacing:-0.723px;">1.17092</div>
<div class="t" style="left:816.30px;top:146px;letter-spacing:-0.723px;">1.16992</div>
<div class="t" style="left:948.30px;top:146px;letter-spacing:-0.723px;">1.17192</div>
<svg style="left:3px;top:167px" width="13" height="14" viewBox="0 0 13 14"><rect x="0.5" y="0.5" width="11.500" height="13" rx="1.5" fill="#ffffff" stroke="#686868"/><path d="M6.500 3.300l3.600 3.900H8.200v3H4.800v-3H2.900z" fill="#30c030" stroke="#108010" stroke-width="0.9" stroke-linejoin="round"/></svg>
<div class="t" style="left:22.50px;top:166px;letter-spacing:-1.672px;">8</div>
<div class="t" style="left:221.60px;top:166px;letter-spacing:-0.611px;">2018.06.01 03:15</div>
<div class="t" style="left:387.70px;top:166px;letter-spacing:1.057px;">t/p</div>
<div class="t" style="left:497.40px;top:166px;letter-spacing:-1.672px;">3</div>
<div class="t" style="left:570.50px;top:166px;letter-spacing:-0.711px;">0.10</div>
<div class="t" style="left:684.30px;top:166px;letter-spacing:-0.723px;">1.16892</div>
<div class="t" style="left:816.30px;top:166px;letter-spacing:-0.723px;">1.17092</div>
<div class="t" style="left:948.30px;top:166px;letter-spacing:-0.723px;">1.16892</div>
<div class="t" style="left:1132.80px;top:166px;letter-spacing:-0.836px;">9.53</div>
<div class="t" style="left:1286.40px;top:166px;letter-spacing:-0.766px;">1000.72</div>
<svg style="left:3px;top:187px" width="15" height="15" viewBox="0 0 15 15"><path d="M1.500 0.500h6.500l3 3v9.500h-9.500a1 1 0 0 1-1-1v-10.500a1 1 0 0 1 1-1z" fill="#fbfbfb" stroke="#686868"/><path d="M8 0.500v3h3" fill="none" stroke="#686868" stroke-width="0.9"/><path d="M2.500 3.500h5M5 3.500v5.500" stroke="#303030" stroke-width="1.2" fill="none"/><circle cx="10.500" cy="11.300" r="3.200" fill="#1e98f0" stroke="#1060b0" stroke-width="0.7"/><circle cx="9.700" cy="10.300" r="1" fill="#ffffff" fill-opacity="0.45"/></svg>
<div class="t" style="left:22.50px;top:186px;letter-spacing:-1.672px;">9</div>
<div class="t" style="left:221.60px;top:186px;letter-spacing:-0.611px;">2018.06.01 03:15</div>
<div class="t" style="left:371.20px;top:186px;letter-spacing:0.052px;">delete</div>
<div class="t" style="left:497.40px;top:186px;letter-spacing:-1.672px;">4</div>
<div class="t" style="left:570.50px;top:186px;letter-spacing:-0.711px;">0.20</div>
<div class="t" style="left:684.30px;top:186px;letter-spacing:-0.723px;">1.17092</div>
<div class="t" style="left:816.30px;top:186px;letter-spacing:-0.723px;">1.16992</div>
<div class="t" style="left:948.30px;top:186px;letter-spacing:-0.723px;">1.17192</div>
<svg style="left:3px;top:207px" width="15" height="15" viewBox="0 0 15 15"><path d="M1.500 0.500h6.500l3 3v9.500h-9.500a1 1 0 0 1-1-1v-10.500a1 1 0 0 1 1-1z" fill="#fbfbfb" stroke="#686868"/><path d="M8 0.500v3h3" fill="none" stroke="#686868" stroke-width="0.9"/><circle cx="10.500" cy="11.300" r="3.200" fill="#f04818" stroke="#b83008" stroke-width="0.7"/><circle cx="9.700" cy="10.300" r="1" fill="#ffffff" fill-opacity="0.45"/></svg>
<div class="t" style="left:22.50px;top:206px;letter-spacing:-1.172px;">10</div>
<div class="t" style="left:221.60px;top:206px;letter-spacing:-0.611px;">2018.06.01 03:15</div>
<div class="t" style="left:387.70px;top:206px;letter-spacing:-0.379px;">sell</div>
<div class="t" style="left:497.40px;top:206px;letter-spacing:-1.672px;">5</div>
<div class="t" style="left:570.50px;top:206px;letter-spacing:-0.711px;">0.10</div>
<div class="t" style="left:684.30px;top:206px;letter-spacing:-0.723px;">1.16886</div>
<div class="t" style="left:816.30px;top:206px;letter-spacing:-0.723px;">1.16986</div>
<div class="t" style="left:948.30px;top:206px;letter-spacing:-0.723px;">1.16786</div>
<svg style="left:3px;top:227px" width="15" height="15" viewBox="0 0 15 15"><path d="M1.500 0.500h6.500l3 3v9.500h-9.500a1 1 0 0 1-1-1v-10.500a1 1 0 0 1 1-1z" fill="#fbfbfb" stroke="#686868"/><path d="M8 0.500v3h3" fill="none" stroke="#686868" stroke-width="0.9"/><path d="M2.500 3.500h5M5 3.500v5.500" stroke="#303030" stroke-width="1.2" fill="none"/><circle cx="10.500" cy="11.300" r="3.200" fill="#1e98f0" stroke="#1060b0" stroke-width="0.7"/><circle cx="9.700" cy="10.300" r="1" fill="#ffffff" fill-opacity="0.45"/></svg>
<div class="t" style="left:22.50px;top:226px;letter-spacing:-0.727px;">11</div>
<div class="t" style="left:221.60px;top:226px;letter-spacing:-0.611px;">2018.06.01 03:17</div>
<div class="t" style="left:358.70px;top:226px;letter-spacing:0.020px;">buy stop</div>
<div class="t" style="left:497.40px;top:226px;letter-spacing:-1.672px;">6</div>
<div class="t" style="left:570.50px;top:226px;letter-spacing:-0.711px;">0.20</div>
<div class="t" style="left:684.30px;top:226px;letter-spacing:-0.723px;">1.16986</div>
<div class="t" style="left:816.30px;top:226px;letter-spacing:-0.723px;">1.16886</div>
<div class="t" style="left:948.30px;top:226px;letter-spacing:-0.723px;">1.17086</div>
<svg style="left:3px;top:247px" width="13" height="14" viewBox="0 0 13 14"><rect x="0.5" y="0.5" width="11.500" height="13" rx="1.5" fill="#ffffff" stroke="#686868"/><path d="M6.500 3.300l3.600 3.900H8.200v3H4.800v-3H2.900z" fill="#30c030" stroke="#108010" stroke-width="0.9" stroke-linejoin="round"/></svg>
<div class="t" style="left:22.50px;top:246px;letter-spacing:-1.172px;">12</div>
<div class="t" style="left:221.60px;top:246px;letter-spacing:-0.611px;">2018.06.01 06:20</div>
<div class="t" style="left:387.70px;top:246px;letter-spacing:1.057px;">t/p</div>
<div class="t" style="left:497.40px;top:246px;letter-spacing:-1.672px;">5</div>
<div class="t" style="left:570.50px;top:246px;letter-spacing:-0.711px;">0.10</div>
<div class="t" style="left:684.30px;top:246px;letter-spacing:-0.723px;">1.16786</div>
<div class="t" style="left:816.30px;top:246px;letter-spacing:-0.723px;">1.16986</div>
<div class="t" style="left:948.30px;top:246px;letter-spacing:-0.723px;">1.16786</div>
<div class="t" style="left:1132.80px;top:246px;letter-spacing:-0.836px;">9.53</div>
<div class="t" style="left:1286.40px;top:246px;letter-spacing:-0.766px;">1010.25</div>
<svg style="left:3px;top:267px" width="15" height="15" viewBox="0 0 15 15"><path d="M1.500 0.500h6.500l3 3v9.500h-9.500a1 1 0 0 1-1-1v-10.500a1 1 0 0 1 1-1z" fill="#fbfbfb" stroke="#686868"/><path d="M8 0.500v3h3" fill="none" stroke="#686868" stroke-width="0.9"/><path d="M2.500 3.500h5M5 3.500v5.500" stroke="#303030" stroke-width="1.2" fill="none"/><circle cx="10.500" cy="11.300" r="3.200" fill="#1e98f0" stroke="#1060b0" stroke-width="0.7"/><circle cx="9.700" cy="10.300" r="1" fill="#ffffff" fill-opacity="0.45"/></svg>
<div class="t" style="left:22.50px;top:266px;letter-spacing:-1.172px;">13</div>
<div class="t" style="left:221.60px;top:266px;letter-spacing:-0.611px;">2018.06.01 06:20</div>
<div class="t" style="left:371.20px;top:266px;letter-spacing:0.052px;">delete</div>
<div class="t" style="left:497.40px;top:266px;letter-spacing:-1.672px;">6</div>
<div class="t" style="left:570.50px;top:266px;letter-spacing:-0.711px;">0.20</div>
<div class="t" style="left:684.30px;top:266px;letter-spacing:-0.723px;">1.16986</div>
<div class="t" style="left:816.30px;top:266px;letter-spacing:-0.723px;">1.16886</div>
<div class="t" style="left:948.30px;top:266px;letter-spacing:-0.723px;">1.17086</div>
<svg style="left:3px;top:287px" width="15" height="15" viewBox="0 0 15 15"><path d="M1.500 0.500h6.500l3 3v9.500h-9.500a1 1 0 0 1-1-1v-10.500a1 1 0 0 1 1-1z" fill="#fbfbfb" stroke="#686868"/><path d="M8 0.500v3h3" fill="none" stroke="#686868" stroke-width="0.9"/><circle cx="10.500" cy="11.300" r="3.200" fill="#f04818" stroke="#b83008" stroke-width="0.7"/><circle cx="9.700" cy="10.300" r="1" fill="#ffffff" fill-opacity="0.45"/></svg>
<div class="t" style="left:22.50px;top:286px;letter-spacing:-1.172px;">14</div>
<div class="t" style="left:221.60px;top:286px;letter-spacing:-0.611px;">2018.06.01 06:20</div>
<div class="t" style="left:387.70px;top:286px;letter-spacing:-0.379px;">sell</div>
<div class="t" style="left:497.40px;top:286px;letter-spacing:-1.672px;">7</div>
<div class="t" style="left:570.50px;top:286px;letter-spacing:-0.711px;">0.10</div>
<div class="t" style="left:684.30px;top:286px;letter-spacing:-0.723px;">1.16770</div>
<div class="t" style="left:816.30px;top:286px;letter-spacing:-0.723px;">1.16870</div>
<div class="t" style="left:948.30px;top:286px;letter-spacing:-0.723px;">1.16670</div>
<svg style="left:3px;top:307px" width="15" height="15" viewBox="0 0 15 15"><path d="M1.500 0.500h6.500l3 3v9.500h-9.500a1 1 0 0 1-1-1v-10.500a1 1 0 0 1 1-1z" fill="#fbfbfb" stroke="#686868"/><path d="M8 0.500v3h3" fill="none" stroke="#686868" stroke-width="0.9"/><path d="M2.500 3.500h5M5 3.500v5.500" stroke="#303030" stroke-width="1.2" fill="none"/><circle cx="10.500" cy="11.300" r="3.200" fill="#1e98f0" stroke="#1060b0" stroke-width="0.7"/><circle cx="9.700" cy="10.300" r="1" fill="#ffffff" fill-opacity="0.45"/></svg>
<div class="t" style="left:22.50px;top:306px;letter-spacing:-1.172px;">15</div>
<div class="t" style="left:221.60px;top:306px;letter-spacing:-0.611px;">2018.06.01 06:22</div>
<div class="t" style="left:358.70px;top:306px;letter-spacing:0.020px;">buy stop</div>
<div class="t" style="left:497.40px;top:306px;letter-spacing:-1.672px;">8</div>
<div class="t" style="left:570.50px;top:306px;letter-spacing:-0.711px;">0.20</div>
<div class="t" style="left:684.30px;top:306px;letter-spacing:-0.723px;">1.16870</div>
<div class="t" style="left:816.30px;top:306px;letter-spacing:-0.723px;">1.16770</div>
<div class="t" style="left:948.30px;top:306px;letter-spacing:-0.723px;">1.16970</div>
<svg style="left:3px;top:327px" width="13" height="14" viewBox="0 0 13 14"><rect x="0.5" y="0.5" width="11.500" height="13" rx="1.5" fill="#ffffff" stroke="#686868"/><path d="M6.500 3.300l3.600 3.900H8.200v3H4.800v-3H2.900z" fill="#30c030" stroke="#108010" stroke-width="0.9" stroke-linejoin="round"/></svg>
<div class="t" style="left:22.50px;top:326px;letter-spacing:-1.172px;">16</div>
<div class="t" style="left:221.60px;top:326px;letter-spacing:-0.611px;">2018.06.01 08:20</div>
<div class="t" style="left:387.70px;top:326px;letter-spacing:1.057px;">t/p</div>
<div class="t" style="left:497.40px;top:326px;letter-spacing:-1.672px;">7</div>
<div class="t" style="left:570.50px;top:326px;letter-spacing:-0.711px;">0.10</div>
<div class="t" style="left:684.30px;top:326px;letter-spacing:-0.723px;">1.16670</div>
<div class="t" style="left:816.30px;top:326px;letter-spacing:-0.723px;">1.16870</div>
<div class="t" style="left:948.30px;top:326px;letter-spacing:-0.723px;">1.16670</div>
<div class="t" style="left:1132.80px;top:326px;letter-spacing:-0.836px;">9.53</div>
<div class="t" style="left:1286.40px;top:326px;letter-spacing:-0.766px;">1019.78</div>
<svg style="left:3px;top:347px" width="15" height="15" viewBox="0 0 15 15"><path d="M1.500 0.500h6.500l3 3v9.500h-9.500a1 1 0 0 1-1-1v-10.500a1 1 0 0 1 1-1z" fill="#fbfbfb" stroke="#686868"/><path d="M8 0.500v3h3" fill="none" stroke="#686868" stroke-width="0.9"/><path d="M2.500 3.500h5M5 3.500v5.500" stroke="#303030" stroke-width="1.2" fill="none"/><circle cx="10.500" cy="11.300" r="3.200" fill="#1e98f0" stroke="#1060b0" stroke-width="0.7"/><circle cx="9.700" cy="10.300" r="1" fill="#ffffff" fill-opacity="0.45"/></svg>
<div class="t" style="left:22.50px;top:346px;letter-spacing:-1.172px;">17</div>
<div class="t" style="left:221.60px;top:346px;letter-spacing:-0.611px;">2018.06.01 08:20</div>
<div class="t" style="left:371.20px;top:346px;letter-spacing:0.052px;">delete</div>
<div class="t" style="left:497.40px;top:346px;letter-spacing:-1.672px;">8</div>
<div class="t" style="left:570.50px;top:346px;letter-spacing:-0.711px;">0.20</div>
<div class="t" style="left:684.30px;top:346px;letter-spacing:-0.723px;">1.16870</div>
<div class="t" style="left:816.30px;top:346px;letter-spacing:-0.723px;">1.16770</div>
<div class="t" style="left:948.30px;top:346px;letter-spacing:-0.723px;">1.16970</div>
<svg style="left:3px;top:367px" width="15" height="15" viewBox="0 0 15 15"><path d="M1.500 0.500h6.500l3 3v9.500h-9.500a1 1 0 0 1-1-1v-10.500a1 1 0 0 1 1-1z" fill="#fbfbfb" stroke="#686868"/><path d="M8 0.500v3h3" fill="none" stroke="#686868" stroke-width="0.9"/><circle cx="10.500" cy="11.300" r="3.200" fill="#f04818" stroke="#b83008" stroke-width="0.7"/><circle cx="9.700" cy="10.300" r="1" fill="#ffffff" fill-opacity="0.45"/></svg>
<div class="t" style="left:22.50px;top:366px;letter-spacing:-1.172px;">18</div>
<div class="t" style="left:221.60px;top:366px;letter-spacing:-0.611px;">2018.06.01 08:20</div>
<div class="t" style="left:387.70px;top:366px;letter-spacing:-0.379px;">sell</div>
<div class="t" style="left:497.40px;top:366px;letter-spacing:-1.672px;">9</div>
<div class="t" style="left:570.50px;top:366px;letter-spacing:-0.711px;">0.10</div>
<div class="t" style="left:684.30px;top:366px;letter-spacing:-0.723px;">1.16653</div>
<div class="t" style="left:816.30px;top:366px;letter-spacing:-0.723px;">1.16753</div>
<div class="t" style="left:948.30px;top:366px;letter-spacing:-0.723px;">1.16553</div>
</div>
<div class="a" style="left:1345px;top:304px;width:18px;height:375px;background:#f0f0f0;"></div>
<div class="a" style="left:1346px;top:321px;width:15px;height:31px;background:#cdcdcd;"></div>
<svg style="left:1349px;top:311px" width="9" height="6" viewBox="0 0 9 6"><path d="M0.8 5.2L4.5 1.5 8.2 5.2" fill="none" stroke="#505050" stroke-width="1.7"/></svg>
<svg style="left:1349px;top:667px" width="9" height="6" viewBox="0 0 9 6"><path d="M0.8 0.8L4.5 4.5 8.2 0.8" fill="none" stroke="#505050" stroke-width="1.7"/></svg>
<svg style="left:0;top:380px;filter:drop-shadow(2px 3px 2px rgba(0,0,0,0.4))" width="1366" height="60" viewBox="0 380 1366 60"><path d="M511 399.500H499.600V420.300H510" fill="none" stroke="#ff0000" stroke-width="3" stroke-linecap="round" stroke-linejoin="round"/><path d="M705 407.500L712 406.500L715 405.500H740.500" fill="none" stroke="#ff0000" stroke-width="3" stroke-linecap="round" stroke-linejoin="round"/><path d="M706.500 426.500H741.500" fill="none" stroke="#ff0000" stroke-width="3" stroke-linecap="round" stroke-linejoin="round"/><path d="M1143.500 426.500H1150L1152.500 425.500H1171" fill="none" stroke="#ff0000" stroke-width="3" stroke-linecap="round" stroke-linejoin="round"/></svg>
<div class="hl" style="left:16px;top:679px;width:1347px;background:#000000"></div>
<div class="a" style="left:80px;top:679px;width:57px;height:20px;background:#ffffff;border:1px solid #000;border-top:none;box-sizing:border-box;box-shadow:1px 1px 0 rgba(0,0,0,0.35);"></div>
<div class="t" style="left:28.30px;top:681px;letter-spacing:-0.168px;color:#808080;">Settings</div>
<div class="t" style="left:90.10px;top:681px;letter-spacing:-0.431px;">Results</div>
<div class="t" style="left:147.40px;top:681px;letter-spacing:-0.369px;color:#808080;">Graph</div>
<div class="t" style="left:199.30px;top:681px;letter-spacing:-0.169px;color:#808080;">Report</div>
<div class="t" style="left:253.70px;top:681px;letter-spacing:-0.123px;color:#808080;">Journal</div>
<div class="vl" style="left:189px;top:683px;height:14px;background:#505050"></div>
<div class="vl" style="left:244px;top:683px;height:14px;background:#505050"></div>
<div class="vl" style="left:302px;top:683px;height:14px;background:#505050"></div>
<div class="t" style="left:-12px;top:676px;width:40px;text-align:center;transform:rotate(-90deg);transform-origin:50% 50%;letter-spacing:-0.3px;color:#101830;">Tester</div>
<div class="t" style="left:1073.40px;top:650px;letter-spacing:0.442px;line-height:23px;height:23px;font-size:19px;color:rgba(120,120,120,0.55);">Activate Windows</div>
<div class="t" style="left:1073.40px;top:676px;letter-spacing:0.430px;line-height:18px;height:18px;font-size:14px;color:rgba(130,130,130,0.5);">Go to Settings to activate Windows.</div>
<div class="hl" style="left:0px;top:703px;width:1366px;background:#ffffff"></div>
<div class="hl" style="left:0px;top:704px;width:1366px;background:#a0a0a0"></div>
<div class="t" style="left:2.40px;top:710px;letter-spacing:-0.408px;">For Help, press F1</div>
<div class="vl" style="left:672px;top:709px;height:19px;background:#a0a0a0"></div>
<div class="vl" style="left:788px;top:709px;height:19px;background:#a0a0a0"></div>
<div class="vl" style="left:890px;top:709px;height:19px;background:#a0a0a0"></div>
<div class="vl" style="left:961px;top:709px;height:19px;background:#a0a0a0"></div>
<div class="vl" style="left:1032px;top:709px;height:19px;background:#a0a0a0"></div>
<div class="vl" style="left:1100px;top:709px;height:19px;background:#a0a0a0"></div>
<div class="vl" style="left:1170px;top:709px;height:19px;background:#a0a0a0"></div>
<div class="vl" style="left:1236px;top:709px;height:19px;background:#a0a0a0"></div>
<div class="t" style="left:679.10px;top:710px;letter-spacing:-0.188px;">Default</div>
<div class="t" style="left:794.40px;top:710px;letter-spacing:-0.611px;">2018.06.01 20:00</div>
<div class="t" style="left:896.20px;top:710px;letter-spacing:-0.514px;">O: 1.16654</div>
<div class="t" style="left:967.50px;top:710px;letter-spacing:-0.549px;">H: 1.16693</div>
<div class="t" style="left:1038.80px;top:710px;letter-spacing:-0.659px;">L: 1.16552</div>
<div class="t" style="left:1106.30px;top:710px;letter-spacing:-0.639px;">C: 1.16576</div>
<div class="t" style="left:1176.00px;top:710px;letter-spacing:-0.658px;">V: 2199</div>
<div class="t" style="left:1269.20px;top:710px;letter-spacing:-0.127px;">273/2 kb</div>
<svg style="left:1242px;top:711px" width="23" height="13" viewBox="0 0 23 13"><rect x="0" y="0" width="2" height="9" fill="#4e7a00"/><rect x="0" y="10" width="2" height="3" fill="#0a3850"/><rect x="3" y="0" width="2" height="8" fill="#4e7a00"/><rect x="3" y="9" width="2" height="4" fill="#0a3850"/><rect x="6" y="0" width="2" height="7" fill="#4e7a00"/><rect x="6" y="8" width="2" height="5" fill="#0a3850"/><rect x="9" y="0" width="2" height="6" fill="#4e7a00"/><rect x="9" y="7" width="2" height="6" fill="#0a3850"/><rect x="12" y="0" width="2" height="5" fill="#4e7a00"/><rect x="12" y="6" width="2" height="7" fill="#0a3850"/><rect x="15" y="0" width="2" height="4" fill="#4e7a00"/><rect x="15" y="5" width="2" height="8" fill="#0a3850"/><rect x="18" y="0" width="2" height="3" fill="#4e7a00"/><rect x="18" y="4" width="2" height="9" fill="#0a3850"/><rect x="21" y="0" width="2" height="2" fill="#4e7a00"/><rect x="21" y="3" width="2" height="10" fill="#0a3850"/></svg>

</div>
</body>
</html>
